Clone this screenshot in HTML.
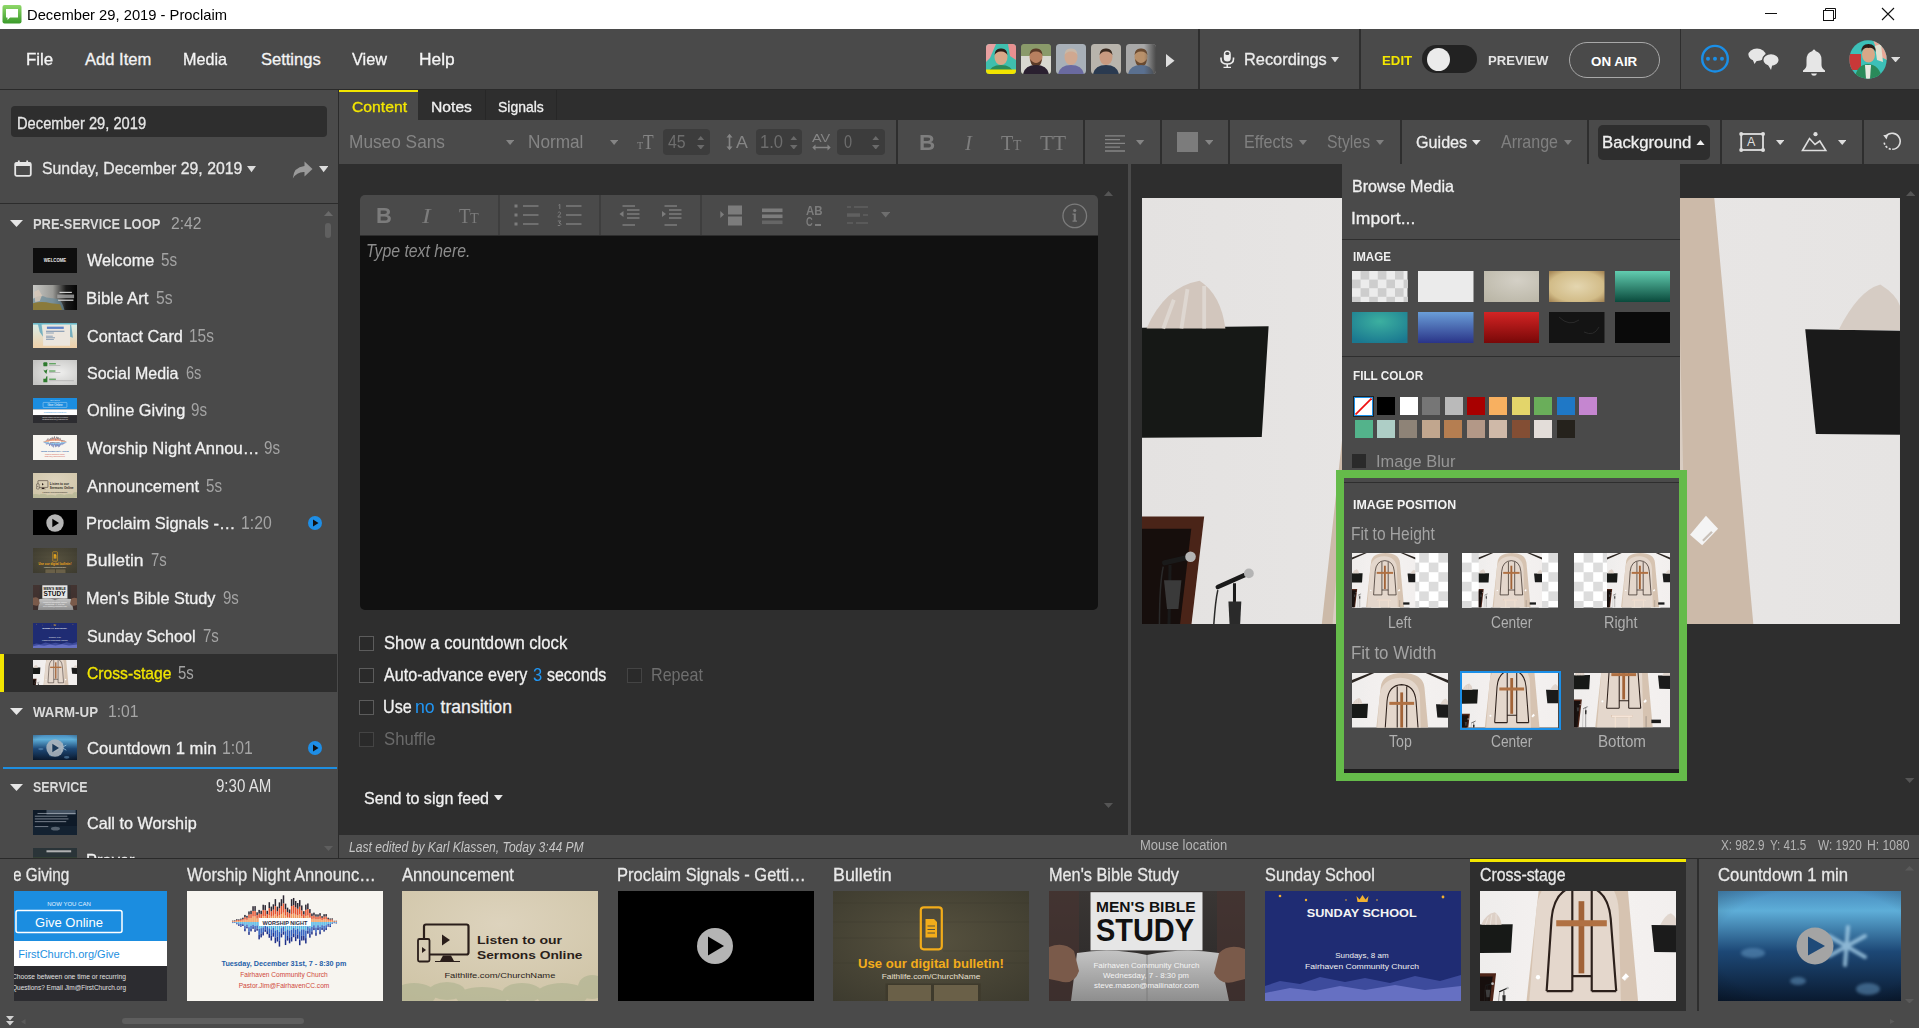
<!DOCTYPE html>
<html><head><meta charset="utf-8"><style>
html,body{margin:0;padding:0;width:1919px;height:1028px;overflow:hidden;background:#2e2e2e;font-family:'Liberation Sans',sans-serif}
div{position:absolute;box-sizing:border-box}
.t{line-height:0;white-space:pre;transform-origin:0 0}
svg{position:absolute}

</style></head><body>
<div style="left:0px;top:0px;width:1919px;height:29px;background:#ffffff;"></div>
<svg style="left:2px;top:5px" width="20" height="19" viewBox="0 0 20 19"><defs><linearGradient id="ag" x1="0" y1="0" x2="0" y2="1"><stop offset="0" stop-color="#8fd86a"/><stop offset="1" stop-color="#3a9a2a"/></linearGradient></defs><rect x="0.5" y="0" width="19" height="18.5" rx="2" fill="url(#ag)"/><path d="M4 4H16V12.5H8L5.5 15V12.5H4Z" fill="#fff"/></svg>
<div class="t" style="left:27.04px;top:14.5px;font-size:15.41px;color:#000;transform:scaleX(0.957);">December 29, 2019 - Proclaim</div>
<div style="left:1765px;top:13px;width:12px;height:1px;background:#111;"></div>
<svg style="left:1822px;top:7px" width="15" height="15" viewBox="0 0 15 15"><path d="M3.5 3.5V1.5H13.5V11.5H11.5" fill="none" stroke="#111" stroke-width="1"/><rect x="1.5" y="3.5" width="10" height="10" fill="none" stroke="#111" stroke-width="1"/></svg>
<svg style="left:1881px;top:7px" width="14" height="14" viewBox="0 0 14 14"><path d="M1 1L13 13M13 1L1 13" stroke="#111" stroke-width="1.1"/></svg>
<div style="left:0px;top:29px;width:1919px;height:60px;background:#4a4a4a;"></div>
<div style="left:0px;top:89px;width:1919px;height:1px;background:#2a2a2a;"></div>
<div class="t" style="left:25.68px;top:59.5px;font-size:16.57px;color:#f4f4f4;-webkit-text-stroke:0.3px #f4f4f4;transform:scaleX(1.021);">File</div>
<div class="t" style="left:85px;top:59.5px;font-size:16.57px;color:#f4f4f4;-webkit-text-stroke:0.3px #f4f4f4;">Add Item</div>
<div class="t" style="left:182.82px;top:59.5px;font-size:16.57px;color:#f4f4f4;-webkit-text-stroke:0.3px #f4f4f4;transform:scaleX(0.976);">Media</div>
<div class="t" style="left:260.9px;top:59.5px;font-size:16.57px;color:#f4f4f4;-webkit-text-stroke:0.3px #f4f4f4;">Settings</div>
<div class="t" style="left:352px;top:59.5px;font-size:16.57px;color:#f4f4f4;-webkit-text-stroke:0.3px #f4f4f4;transform:scaleX(0.983);">View</div>
<div class="t" style="left:418.65px;top:59.5px;font-size:16.57px;color:#f4f4f4;-webkit-text-stroke:0.3px #f4f4f4;transform:scaleX(1.048);">Help</div>
<svg style="left:986px;top:44px" width="30" height="30" viewBox="0 0 30 30"><defs><clipPath id="av986"><rect width="30" height="30" rx="3.5"/></clipPath></defs><g clip-path="url(#av986)"><rect width="30" height="30" fill="#3fbfae"/><path d="M0 0L10 0L4 14L0 18Z" fill="#e8a0a0"/><path d="M22 0H30V16L24 12Z" fill="#e89090"/><ellipse cx="15" cy="13" rx="6.5" ry="8" fill="#d8a888"/><path d="M8.5 11Q9 4 15 4.5Q21 4 21.5 11Q19 7 15 7.5Q11 7 8.5 11Z" fill="#2c1e18"/><path d="M2 30Q4 21 15 21Q26 21 28 30Z" fill="#2a8a5a"/><rect x="0" y="25.5" width="30" height="5" fill="#f2e400"/></g></svg>
<svg style="left:1021px;top:44px" width="30" height="30" viewBox="0 0 30 30"><defs><clipPath id="av1021"><rect width="30" height="30" rx="3.5"/></clipPath></defs><g clip-path="url(#av1021)"><rect width="30" height="30" fill="#7a8a5a"/><rect x="0" y="0" width="30" height="12" fill="#8a9a6a"/><rect x="0" y="12" width="30" height="18" fill="#d8d8d0"/><ellipse cx="15" cy="13" rx="6.5" ry="8" fill="#b88060"/><path d="M8.5 11Q9 4 15 4.5Q21 4 21.5 11Q19 7 15 7.5Q11 7 8.5 11Z" fill="#5a3a28"/><path d="M9 15Q10 23 15 23Q20 23 21 15Q18 19 15 19Q12 19 9 15Z" fill="#5a3a28"/><path d="M2 30Q4 21 15 21Q26 21 28 30Z" fill="#2a2030"/></g></svg>
<svg style="left:1056px;top:44px" width="30" height="30" viewBox="0 0 30 30"><defs><clipPath id="av1056"><rect width="30" height="30" rx="3.5"/></clipPath></defs><g clip-path="url(#av1056)"><rect width="30" height="30" fill="#a8b0b8"/><ellipse cx="15" cy="13" rx="6.5" ry="8" fill="#d0a890"/><path d="M8.5 11Q9 4 15 4.5Q21 4 21.5 11Q19 7 15 7.5Q11 7 8.5 11Z" fill="#c8b8a8"/><path d="M2 30Q4 21 15 21Q26 21 28 30Z" fill="#6a6aa0"/></g></svg>
<svg style="left:1091px;top:44px" width="30" height="30" viewBox="0 0 30 30"><defs><clipPath id="av1091"><rect width="30" height="30" rx="3.5"/></clipPath></defs><g clip-path="url(#av1091)"><rect width="30" height="30" fill="#b8b4ac"/><ellipse cx="15" cy="13" rx="6.5" ry="8" fill="#c89a80"/><path d="M8.5 11Q9 4 15 4.5Q21 4 21.5 11Q19 7 15 7.5Q11 7 8.5 11Z" fill="#3a2a20"/><path d="M2 30Q4 21 15 21Q26 21 28 30Z" fill="#2a3a50"/></g></svg>
<svg style="left:1126px;top:44px" width="30" height="30" viewBox="0 0 30 30"><defs><linearGradient id="fade" x1="0" x2="1"><stop offset="0" stop-color="#4a4a4a" stop-opacity="0"/><stop offset="1" stop-color="#4a4a4a" stop-opacity="1"/></linearGradient></defs><defs><clipPath id="av1126"><rect width="30" height="30" rx="3.5"/></clipPath></defs><g clip-path="url(#av1126)"><rect width="30" height="30" fill="#a8a8a8"/><ellipse cx="15" cy="13" rx="6.5" ry="8" fill="#b8906a"/><path d="M8.5 11Q9 4 15 4.5Q21 4 21.5 11Q19 7 15 7.5Q11 7 8.5 11Z" fill="#6a4a30"/><path d="M9 15Q10 23 15 23Q20 23 21 15Q18 19 15 19Q12 19 9 15Z" fill="#6a4a30"/><path d="M2 30Q4 21 15 21Q26 21 28 30Z" fill="#5a7090"/><rect x="18" y="0" width="12" height="30" fill="url(#fade)"/></g></svg>
<svg style="left:1166px;top:54px" width="9" height="13.4" viewBox="0 0 9 13.4"><path d="M0 0L8.5 6.7L0 13.4Z" fill="#dedede"/></svg>
<div style="left:1198.3px;top:29px;width:1.3px;height:60px;background:#2e2e2e;"></div>
<svg style="left:1220px;top:49.5px" width="14.5" height="18.5" viewBox="0 0 14.5 18.5"><rect x="3.8" y="0.5" width="7" height="11" rx="3.5" fill="#ececec"/><path d="M1 7.5V9Q1 14 7.25 14Q13.5 14 13.5 9V7.5" fill="none" stroke="#ececec" stroke-width="1.6"/><path d="M7.25 14V17.2M3.5 17.5H11" stroke="#ececec" stroke-width="1.6"/><rect x="5.3" y="2" width="4" height="3" rx="1.5" fill="#4a4a4a"/></svg>
<div class="t" style="left:1243.71px;top:59.5px;font-size:16.57px;color:#ececec;-webkit-text-stroke:0.3px #ececec;transform:scaleX(0.988);">Recordings</div>
<svg style="left:1331.3px;top:57px" width="8" height="5.4" viewBox="0 0 8 5.4"><path d="M0 0H8L4 5.4Z" fill="#dddddd"/></svg>
<div style="left:1359.4px;top:29px;width:1.3px;height:60px;background:#2e2e2e;"></div>
<div class="t" style="left:1381.8px;top:61px;font-size:12.65px;color:#f3e600;font-weight:bold;transform:scaleX(1.047);">EDIT</div>
<div style="left:1422px;top:45px;width:55px;height:28px;border-radius:14px;background:#222"></div>
<div style="left:1427px;top:47.5px;width:23px;height:23px;border-radius:50%;background:#ebebeb"></div>
<div class="t" style="left:1487.8px;top:60.5px;font-size:13.37px;color:#e4e4e4;font-weight:bold;transform:scaleX(0.982);">PREVIEW</div>
<div style="left:1569px;top:42px;width:91px;height:36px;border-radius:18px;border:1.5px solid #a8a8a8"></div>
<div class="t" style="left:1591px;top:61.5px;font-size:13.37px;color:#ffffff;font-weight:bold;">ON AIR</div>
<div style="left:1679.9px;top:29px;width:1.3px;height:60px;background:#2e2e2e;"></div>
<svg style="left:1700px;top:44px" width="30" height="30" viewBox="0 0 30 30"><circle cx="15" cy="14.7" r="12.8" fill="none" stroke="#1a8fe8" stroke-width="2.4"/><circle cx="8" cy="14.7" r="2" fill="#1a8fe8"/><circle cx="15" cy="14.7" r="2" fill="#1a8fe8"/><circle cx="22" cy="14.7" r="2" fill="#1a8fe8"/></svg>
<svg style="left:1748px;top:48px" width="32" height="23" viewBox="0 0 32 23"><ellipse cx="9" cy="6.8" rx="8.6" ry="6.2" fill="#e6e6e6"/><path d="M4 10L6.5 16L10 11Z" fill="#e6e6e6"/><ellipse cx="23" cy="12" rx="8.3" ry="6.6" fill="#e6e6e6" stroke="#4a4a4a" stroke-width="1.5"/><path d="M19.5 16L23 22L24.5 16Z" fill="#e6e6e6"/></svg>
<svg style="left:1802px;top:47.5px" width="24" height="28" viewBox="0 0 24 28"><path d="M12 1.5Q13.5 1.5 13.5 3Q19.5 4.5 19.5 12V17Q19.5 20 23 22.5V24H1V22.5Q4.5 20 4.5 17V12Q4.5 4.5 10.5 3Q10.5 1.5 12 1.5Z" fill="#e6e6e6"/><path d="M9 25.5H15Q14.5 27.7 12 27.7Q9.5 27.7 9 25.5Z" fill="#e6e6e6"/></svg>
<svg style="left:1848.5px;top:39.5px" width="38" height="39" viewBox="0 0 38 39"><defs><clipPath id="avc"><ellipse cx="19" cy="19.5" rx="18.7" ry="19.3"/></clipPath></defs><g clip-path="url(#avc)"><rect width="38" height="39" fill="#3cc0b8"/><path d="M0 14H12V30H0Z" fill="#c83838"/><path d="M24 0H38V20L30 16Z" fill="#e8a898"/><path d="M26 6L32 4L34 22L28 20Z" fill="#e0e0d0"/><ellipse cx="19.5" cy="14.5" rx="6.5" ry="8" fill="#d8a888"/><path d="M12.5 12Q12 4 19.5 4Q27 4 26.5 12Q24 7 19.5 8Q15 7 12.5 12Z" fill="#2c1e18"/><path d="M6 39Q7 25 19 24Q31 25 33 39Z" fill="#2a8a5a"/><path d="M16 25H22L21 39H17Z" fill="#e8e8e0"/></g></svg>
<svg style="left:1891px;top:56.7px" width="9.2" height="5.4" viewBox="0 0 9.2 5.4"><path d="M0 0H9.2L4.6 5.4Z" fill="#dddddd"/></svg>
<div style="left:0px;top:90px;width:338px;height:768px;background:#4a4a4a;"></div>
<div style="left:338px;top:90px;width:1px;height:768px;background:#2b2b2b;"></div>
<div style="left:11px;top:106px;width:316px;height:31px;border-radius:4px;background:#2e2e2e"></div>
<div class="t" style="left:17.12px;top:123.5px;font-size:16.72px;color:#e6e6e6;-webkit-text-stroke:0.3px #e6e6e6;transform:scaleX(0.880);">December 29, 2019</div>
<svg style="left:14px;top:159.5px" width="18" height="17" viewBox="0 0 18 17"><rect x="1.2" y="2.8" width="15.6" height="13" rx="1.5" fill="none" stroke="#e6e6e6" stroke-width="1.8"/><rect x="1.2" y="2.8" width="15.6" height="3.2" fill="#e6e6e6"/><path d="M4.8 0.5V3.5M13.2 0.5V3.5" stroke="#e6e6e6" stroke-width="1.8"/></svg>
<div class="t" style="left:41.7px;top:168px;font-size:16.42px;color:#e8e8e8;-webkit-text-stroke:0.3px #e8e8e8;transform:scaleX(0.965);">Sunday, December 29, 2019</div>
<svg style="left:247px;top:166.4px" width="9" height="6.3" viewBox="0 0 9 6.3"><path d="M0 0H9L4.5 6.3Z" fill="#dcdcdc"/></svg>
<svg style="left:291.5px;top:160.5px" width="21" height="18" viewBox="0 0 21 18"><path d="M12.5 0.5L20.5 8L12.5 15.5V11Q5 10.5 0.8 17.5Q1.5 6 12.5 5Z" fill="#9a9a9a"/></svg>
<svg style="left:319px;top:166.4px" width="9.3" height="6.3" viewBox="0 0 9.3 6.3"><path d="M0 0H9.3L4.65 6.3Z" fill="#dcdcdc"/></svg>
<div style="left:0px;top:202.8px;width:338px;height:1.2px;background:#2c2c2c;"></div>
<svg style="left:10.3px;top:220px" width="13" height="7" viewBox="0 0 13 7"><path d="M0 0H13L6.5 7Z" fill="#e6e6e6"/></svg>
<div class="t" style="left:33px;top:224px;font-size:13.95px;color:#dadada;font-weight:bold;transform:scaleX(0.925);">PRE-SERVICE LOOP</div>
<div class="t" style="left:170.7px;top:223px;font-size:17.3px;color:#a6a6a6;transform:scaleX(0.905);">2:42</div>
<svg style="left:324px;top:211px" width="9" height="5" viewBox="0 0 9 5"><path d="M0 5H9L4.5 0Z" fill="#6a6a6a"/></svg>
<div style="left:325px;top:222.5px;width:6px;height:15px;border-radius:3px;background:#606060"></div>
<svg style="left:324px;top:846px" width="9" height="5" viewBox="0 0 9 5"><path d="M0 0H9L4.5 5Z" fill="#5e5e5e"/></svg>
<div style="left:0px;top:654px;width:337px;height:38px;background:#2e2e2e;"></div>
<div style="left:0px;top:654px;width:3.5px;height:38px;background:#f2e500;"></div>
<svg width="0" height="0" style="left:0;top:0;position:absolute">
<symbol id="church" viewBox="0 0 1000 857">
<defs><linearGradient id="wallg" x1="0" y1="0" x2="1" y2="0"><stop offset="0" stop-color="#e4e2e1"/><stop offset="0.5" stop-color="#e9e7e6"/><stop offset="1" stop-color="#e6e4e3"/></linearGradient></defs>
<rect width="1000" height="857" fill="url(#wallg)"/>
<path d="M0 72L185 0H232L0 104Z" fill="#2a2420"/>
<path d="M1000 72L815 0H768L1000 104Z" fill="#2a2420"/>
<path d="M221 857L299 148Q310 5 525 0Q740 5 755 148L820 857Z" fill="#ccbaa9"/>
<path d="M240 857L287 250Q300 60 505 50Q700 60 708 250L722 857Z" fill="#d9cdc2"/>
<path d="M340 659L365 290Q380 125 516 120Q652 125 667 290L695 659M340 659H471M570 659H695M471 140V659M570 140V659M471 582H570" fill="none" stroke="#2a1e1a" stroke-width="11"/>
<rect x="503" y="200" width="29" height="368" fill="#9a5e34"/>
<rect x="389" y="297" width="258" height="31" fill="#a86c40"/>
<path d="M0 319L167 317L158 463L0 464Z" fill="#161816"/>
<path d="M875 321L1000 323V460L889 459Z" fill="#1a1a1a"/>
<path d="M6 320Q30 265 76 257Q104 275 110 320Z" fill="#d2c6bd"/>
<path d="M28 320L42 282M52 320L60 268M82 320L82 264" stroke="#e2dcd6" stroke-width="5" opacity="0.8"/>
<path d="M919 322Q945 270 974 262Q995 275 1000 290V322Z" fill="#d6ccc4"/>
<path d="M0 568H82L48 857H0Z" fill="#4a2418"/><path d="M0 584H65L33 857H0Z" fill="#160e0c"/>
<path d="M30 629L60 622" stroke="#1a1a1a" stroke-width="7" stroke-linecap="round"/><circle cx="64" cy="621" r="7" fill="#b4b4b4"/>
<path d="M37 632L33 857" stroke="#1a1a1a" stroke-width="4"/><path d="M28 634Q18 680 28 857" stroke="#2a2a2a" stroke-width="2" fill="none"/><path d="M29 652H52L48 690H33Z" fill="#3a3a3a"/>
<path d="M100 661L136 645" stroke="#1a1a1a" stroke-width="6" stroke-linecap="round"/><circle cx="141" cy="643" r="6.5" fill="#b4b4b4"/>
<path d="M122 656V857" stroke="#1a1a1a" stroke-width="4"/><path d="M100 665Q92 700 90 857" stroke="#2a2a2a" stroke-width="2" fill="none"/><path d="M114 680H131L129 720H116Z" fill="#2a2a2a"/>
<circle cx="296" cy="588" r="11" fill="#f4f4f4"/><path d="M723 592L744 567L760 584L739 606Z" fill="#f4f4f4"/><path d="M740 600L752 588" stroke="#c8c0b8" stroke-width="3"/>
<path d="M751 740V857" stroke="#2a2a2a" stroke-width="3"/>
<rect x="394" y="731" width="215" height="18" fill="#efe3d8" stroke="#c8a890" stroke-width="3"/>
<path d="M430 749V857M573 749V857" stroke="#e8d8c8" stroke-width="12"/>
<rect x="806" y="776" width="99" height="36" fill="#1a1a1a"/>
</symbol><symbol id='th_giving' viewBox='0 0 196 110' preserveAspectRatio='none'><rect width='196' height='110' fill='#2c2c30'/><rect width='196' height='50' fill='#1b8de0'/><rect y='50' width='196' height='25' fill='#fff'/><text x='98' y='15' font-size='6' fill='#e8f4ff' font-weight='normal' text-anchor='middle' font-family='Liberation Sans' >NOW YOU CAN</text><rect x='45' y='19.5' width='106' height='22' rx='2' fill='none' stroke='#fff' stroke-width='1.5'/><text x='98' y='35.5' font-size='13' fill='#fff' font-weight='normal' text-anchor='middle' font-family='Liberation Sans' >Give Online</text><text x='98' y='67' font-size='11' fill='#1e8fe0' font-weight='normal' text-anchor='middle' font-family='Liberation Sans' >FirstChurch.org/Give</text><text x='41' y='88' font-size='6.8' fill='#e0e0e0' font-weight='normal' text-anchor='start' font-family='Liberation Sans' textLength='114' lengthAdjust='spacingAndGlyphs'>Choose between one time or recurring</text><text x='41' y='99' font-size='6.8' fill='#e0e0e0' font-weight='normal' text-anchor='start' font-family='Liberation Sans' textLength='114' lengthAdjust='spacingAndGlyphs'>Questions? Email Jim@FirstChurch.org</text></symbol><symbol id='th_worship' viewBox='0 0 196 110' preserveAspectRatio='none'><rect width='196' height='110' fill='#f7f5f0'/><rect x='45.00' y='30.53' width='1.5' height='0.47' fill='#f39a5a'/><rect x='45.00' y='30.05' width='1.5' height='0.47' fill='#e5532f'/><rect x='45.00' y='29.64' width='1.5' height='0.41' fill='#2b2633'/><rect x='45.00' y='31.00' width='1.5' height='0.42' fill='#4fb6e6'/><rect x='45.00' y='31.42' width='1.5' height='0.37' fill='#2f5fc0'/><rect x='45.00' y='31.79' width='1.5' height='0.26' fill='#1d2f8a'/><rect x='47.03' y='30.39' width='1.5' height='0.61' fill='#f39a5a'/><rect x='47.03' y='29.78' width='1.5' height='0.61' fill='#e5532f'/><rect x='47.03' y='29.25' width='1.5' height='0.52' fill='#2b2633'/><rect x='47.03' y='31.00' width='1.5' height='0.38' fill='#4fb6e6'/><rect x='47.03' y='31.38' width='1.5' height='0.34' fill='#2f5fc0'/><rect x='47.03' y='31.72' width='1.5' height='0.24' fill='#1d2f8a'/><rect x='49.06' y='30.04' width='1.5' height='0.96' fill='#f39a5a'/><rect x='49.06' y='29.08' width='1.5' height='0.96' fill='#e5532f'/><rect x='49.06' y='28.25' width='1.5' height='0.82' fill='#2b2633'/><rect x='49.06' y='31.00' width='1.5' height='0.91' fill='#4fb6e6'/><rect x='49.06' y='31.91' width='1.5' height='0.80' fill='#2f5fc0'/><rect x='49.06' y='32.71' width='1.5' height='0.57' fill='#1d2f8a'/><rect x='51.09' y='30.08' width='1.5' height='0.92' fill='#f39a5a'/><rect x='51.09' y='29.16' width='1.5' height='0.92' fill='#e5532f'/><rect x='51.09' y='28.38' width='1.5' height='0.79' fill='#2b2633'/><rect x='51.09' y='31.00' width='1.5' height='1.53' fill='#4fb6e6'/><rect x='51.09' y='32.53' width='1.5' height='1.34' fill='#2f5fc0'/><rect x='51.09' y='33.88' width='1.5' height='0.96' fill='#1d2f8a'/><rect x='53.12' y='29.82' width='1.5' height='1.18' fill='#f39a5a'/><rect x='53.12' y='28.65' width='1.5' height='1.18' fill='#e5532f'/><rect x='53.12' y='27.64' width='1.5' height='1.01' fill='#2b2633'/><rect x='53.12' y='31.00' width='1.5' height='1.89' fill='#4fb6e6'/><rect x='53.12' y='32.89' width='1.5' height='1.65' fill='#2f5fc0'/><rect x='53.12' y='34.54' width='1.5' height='1.18' fill='#1d2f8a'/><rect x='55.15' y='29.50' width='1.5' height='1.50' fill='#f39a5a'/><rect x='55.15' y='28.00' width='1.5' height='1.50' fill='#e5532f'/><rect x='55.15' y='26.72' width='1.5' height='1.29' fill='#2b2633'/><rect x='55.15' y='31.00' width='1.5' height='1.59' fill='#4fb6e6'/><rect x='55.15' y='32.59' width='1.5' height='1.40' fill='#2f5fc0'/><rect x='55.15' y='33.99' width='1.5' height='1.00' fill='#1d2f8a'/><rect x='57.18' y='28.53' width='1.5' height='2.47' fill='#f39a5a'/><rect x='57.18' y='26.05' width='1.5' height='2.47' fill='#e5532f'/><rect x='57.18' y='23.93' width='1.5' height='2.12' fill='#2b2633'/><rect x='57.18' y='31.00' width='1.5' height='3.71' fill='#4fb6e6'/><rect x='57.18' y='34.71' width='1.5' height='3.24' fill='#2f5fc0'/><rect x='57.18' y='37.95' width='1.5' height='2.32' fill='#1d2f8a'/><rect x='59.21' y='28.85' width='1.5' height='2.15' fill='#f39a5a'/><rect x='59.21' y='26.70' width='1.5' height='2.15' fill='#e5532f'/><rect x='59.21' y='24.86' width='1.5' height='1.84' fill='#2b2633'/><rect x='59.21' y='31.00' width='1.5' height='2.53' fill='#4fb6e6'/><rect x='59.21' y='33.53' width='1.5' height='2.21' fill='#2f5fc0'/><rect x='59.21' y='35.74' width='1.5' height='1.58' fill='#1d2f8a'/><rect x='61.24' y='27.30' width='1.5' height='3.70' fill='#f39a5a'/><rect x='61.24' y='23.60' width='1.5' height='3.70' fill='#e5532f'/><rect x='61.24' y='20.43' width='1.5' height='3.17' fill='#2b2633'/><rect x='61.24' y='31.00' width='1.5' height='5.15' fill='#4fb6e6'/><rect x='61.24' y='36.15' width='1.5' height='4.51' fill='#2f5fc0'/><rect x='61.24' y='40.65' width='1.5' height='3.22' fill='#1d2f8a'/><rect x='63.27' y='27.06' width='1.5' height='3.94' fill='#f39a5a'/><rect x='63.27' y='23.12' width='1.5' height='3.94' fill='#e5532f'/><rect x='63.27' y='19.74' width='1.5' height='3.38' fill='#2b2633'/><rect x='63.27' y='31.00' width='1.5' height='3.74' fill='#4fb6e6'/><rect x='63.27' y='34.74' width='1.5' height='3.28' fill='#2f5fc0'/><rect x='63.27' y='38.02' width='1.5' height='2.34' fill='#1d2f8a'/><rect x='65.30' y='25.48' width='1.5' height='5.52' fill='#f39a5a'/><rect x='65.30' y='19.96' width='1.5' height='5.52' fill='#e5532f'/><rect x='65.30' y='15.23' width='1.5' height='4.73' fill='#2b2633'/><rect x='65.30' y='31.00' width='1.5' height='2.74' fill='#4fb6e6'/><rect x='65.30' y='33.74' width='1.5' height='2.39' fill='#2f5fc0'/><rect x='65.30' y='36.13' width='1.5' height='1.71' fill='#1d2f8a'/><rect x='67.33' y='25.44' width='1.5' height='5.56' fill='#f39a5a'/><rect x='67.33' y='19.88' width='1.5' height='5.56' fill='#e5532f'/><rect x='67.33' y='15.11' width='1.5' height='4.77' fill='#2b2633'/><rect x='67.33' y='31.00' width='1.5' height='3.95' fill='#4fb6e6'/><rect x='67.33' y='34.95' width='1.5' height='3.46' fill='#2f5fc0'/><rect x='67.33' y='38.41' width='1.5' height='2.47' fill='#1d2f8a'/><rect x='69.36' y='27.59' width='1.5' height='3.41' fill='#f39a5a'/><rect x='69.36' y='24.18' width='1.5' height='3.41' fill='#e5532f'/><rect x='69.36' y='21.26' width='1.5' height='2.92' fill='#2b2633'/><rect x='69.36' y='31.00' width='1.5' height='3.47' fill='#4fb6e6'/><rect x='69.36' y='34.47' width='1.5' height='3.03' fill='#2f5fc0'/><rect x='69.36' y='37.50' width='1.5' height='2.17' fill='#1d2f8a'/><rect x='71.39' y='26.77' width='1.5' height='4.23' fill='#f39a5a'/><rect x='71.39' y='22.53' width='1.5' height='4.23' fill='#e5532f'/><rect x='71.39' y='18.91' width='1.5' height='3.63' fill='#2b2633'/><rect x='71.39' y='31.00' width='1.5' height='6.95' fill='#4fb6e6'/><rect x='71.39' y='37.95' width='1.5' height='6.08' fill='#2f5fc0'/><rect x='71.39' y='44.02' width='1.5' height='4.34' fill='#1d2f8a'/><rect x='73.42' y='27.05' width='1.5' height='3.95' fill='#f39a5a'/><rect x='73.42' y='23.09' width='1.5' height='3.95' fill='#e5532f'/><rect x='73.42' y='19.70' width='1.5' height='3.39' fill='#2b2633'/><rect x='73.42' y='31.00' width='1.5' height='6.16' fill='#4fb6e6'/><rect x='73.42' y='37.16' width='1.5' height='5.39' fill='#2f5fc0'/><rect x='73.42' y='42.55' width='1.5' height='3.85' fill='#1d2f8a'/><rect x='75.45' y='24.96' width='1.5' height='6.04' fill='#f39a5a'/><rect x='75.45' y='18.92' width='1.5' height='6.04' fill='#e5532f'/><rect x='75.45' y='13.74' width='1.5' height='5.18' fill='#2b2633'/><rect x='75.45' y='31.00' width='1.5' height='5.37' fill='#4fb6e6'/><rect x='75.45' y='36.37' width='1.5' height='4.70' fill='#2f5fc0'/><rect x='75.45' y='41.07' width='1.5' height='3.36' fill='#1d2f8a'/><rect x='77.48' y='25.10' width='1.5' height='5.90' fill='#f39a5a'/><rect x='77.48' y='19.20' width='1.5' height='5.90' fill='#e5532f'/><rect x='77.48' y='14.15' width='1.5' height='5.06' fill='#2b2633'/><rect x='77.48' y='31.00' width='1.5' height='3.93' fill='#4fb6e6'/><rect x='77.48' y='34.93' width='1.5' height='3.44' fill='#2f5fc0'/><rect x='77.48' y='38.36' width='1.5' height='2.45' fill='#1d2f8a'/><rect x='79.51' y='27.07' width='1.5' height='3.93' fill='#f39a5a'/><rect x='79.51' y='23.14' width='1.5' height='3.93' fill='#e5532f'/><rect x='79.51' y='19.77' width='1.5' height='3.37' fill='#2b2633'/><rect x='79.51' y='31.00' width='1.5' height='4.87' fill='#4fb6e6'/><rect x='79.51' y='35.87' width='1.5' height='4.26' fill='#2f5fc0'/><rect x='79.51' y='40.13' width='1.5' height='3.04' fill='#1d2f8a'/><rect x='81.54' y='24.07' width='1.5' height='6.93' fill='#f39a5a'/><rect x='81.54' y='17.14' width='1.5' height='6.93' fill='#e5532f'/><rect x='81.54' y='11.20' width='1.5' height='5.94' fill='#2b2633'/><rect x='81.54' y='31.00' width='1.5' height='6.31' fill='#4fb6e6'/><rect x='81.54' y='37.31' width='1.5' height='5.52' fill='#2f5fc0'/><rect x='81.54' y='42.83' width='1.5' height='3.94' fill='#1d2f8a'/><rect x='83.57' y='25.62' width='1.5' height='5.38' fill='#f39a5a'/><rect x='83.57' y='20.23' width='1.5' height='5.38' fill='#e5532f'/><rect x='83.57' y='15.62' width='1.5' height='4.61' fill='#2b2633'/><rect x='83.57' y='31.00' width='1.5' height='7.42' fill='#4fb6e6'/><rect x='83.57' y='38.42' width='1.5' height='6.49' fill='#2f5fc0'/><rect x='83.57' y='44.92' width='1.5' height='4.64' fill='#1d2f8a'/><rect x='85.60' y='24.81' width='1.5' height='6.19' fill='#f39a5a'/><rect x='85.60' y='18.62' width='1.5' height='6.19' fill='#e5532f'/><rect x='85.60' y='13.31' width='1.5' height='5.31' fill='#2b2633'/><rect x='85.60' y='31.00' width='1.5' height='5.87' fill='#4fb6e6'/><rect x='85.60' y='36.87' width='1.5' height='5.13' fill='#2f5fc0'/><rect x='85.60' y='42.00' width='1.5' height='3.67' fill='#1d2f8a'/><rect x='87.63' y='22.99' width='1.5' height='8.01' fill='#f39a5a'/><rect x='87.63' y='14.98' width='1.5' height='8.01' fill='#e5532f'/><rect x='87.63' y='8.11' width='1.5' height='6.87' fill='#2b2633'/><rect x='87.63' y='31.00' width='1.5' height='8.46' fill='#4fb6e6'/><rect x='87.63' y='39.46' width='1.5' height='7.40' fill='#2f5fc0'/><rect x='87.63' y='46.86' width='1.5' height='5.29' fill='#1d2f8a'/><rect x='89.66' y='25.63' width='1.5' height='5.37' fill='#f39a5a'/><rect x='89.66' y='20.27' width='1.5' height='5.37' fill='#e5532f'/><rect x='89.66' y='15.67' width='1.5' height='4.60' fill='#2b2633'/><rect x='89.66' y='31.00' width='1.5' height='7.82' fill='#4fb6e6'/><rect x='89.66' y='38.82' width='1.5' height='6.84' fill='#2f5fc0'/><rect x='89.66' y='45.66' width='1.5' height='4.89' fill='#1d2f8a'/><rect x='91.69' y='24.12' width='1.5' height='6.88' fill='#f39a5a'/><rect x='91.69' y='17.25' width='1.5' height='6.88' fill='#e5532f'/><rect x='91.69' y='11.36' width='1.5' height='5.89' fill='#2b2633'/><rect x='91.69' y='31.00' width='1.5' height='9.84' fill='#4fb6e6'/><rect x='91.69' y='40.84' width='1.5' height='8.61' fill='#2f5fc0'/><rect x='91.69' y='49.45' width='1.5' height='6.15' fill='#1d2f8a'/><rect x='93.72' y='23.01' width='1.5' height='7.99' fill='#f39a5a'/><rect x='93.72' y='15.01' width='1.5' height='7.99' fill='#e5532f'/><rect x='93.72' y='8.16' width='1.5' height='6.85' fill='#2b2633'/><rect x='93.72' y='31.00' width='1.5' height='6.15' fill='#4fb6e6'/><rect x='93.72' y='37.15' width='1.5' height='5.38' fill='#2f5fc0'/><rect x='93.72' y='42.53' width='1.5' height='3.84' fill='#1d2f8a'/><rect x='95.75' y='21.66' width='1.5' height='9.34' fill='#f39a5a'/><rect x='95.75' y='12.32' width='1.5' height='9.34' fill='#e5532f'/><rect x='95.75' y='4.32' width='1.5' height='8.00' fill='#2b2633'/><rect x='95.75' y='31.00' width='1.5' height='5.08' fill='#4fb6e6'/><rect x='95.75' y='36.08' width='1.5' height='4.45' fill='#2f5fc0'/><rect x='95.75' y='40.53' width='1.5' height='3.18' fill='#1d2f8a'/><rect x='97.78' y='24.58' width='1.5' height='6.42' fill='#f39a5a'/><rect x='97.78' y='18.16' width='1.5' height='6.42' fill='#e5532f'/><rect x='97.78' y='12.66' width='1.5' height='5.50' fill='#2b2633'/><rect x='97.78' y='31.00' width='1.5' height='9.22' fill='#4fb6e6'/><rect x='97.78' y='40.22' width='1.5' height='8.07' fill='#2f5fc0'/><rect x='97.78' y='48.28' width='1.5' height='5.76' fill='#1d2f8a'/><rect x='99.81' y='25.99' width='1.5' height='5.01' fill='#f39a5a'/><rect x='99.81' y='20.98' width='1.5' height='5.01' fill='#e5532f'/><rect x='99.81' y='16.68' width='1.5' height='4.30' fill='#2b2633'/><rect x='99.81' y='31.00' width='1.5' height='7.44' fill='#4fb6e6'/><rect x='99.81' y='38.44' width='1.5' height='6.51' fill='#2f5fc0'/><rect x='99.81' y='44.96' width='1.5' height='4.65' fill='#1d2f8a'/><rect x='101.84' y='26.61' width='1.5' height='4.39' fill='#f39a5a'/><rect x='101.84' y='22.22' width='1.5' height='4.39' fill='#e5532f'/><rect x='101.84' y='18.46' width='1.5' height='3.76' fill='#2b2633'/><rect x='101.84' y='31.00' width='1.5' height='8.52' fill='#4fb6e6'/><rect x='101.84' y='39.52' width='1.5' height='7.45' fill='#2f5fc0'/><rect x='101.84' y='46.97' width='1.5' height='5.32' fill='#1d2f8a'/><rect x='103.87' y='23.00' width='1.5' height='8.00' fill='#f39a5a'/><rect x='103.87' y='15.01' width='1.5' height='8.00' fill='#e5532f'/><rect x='103.87' y='8.15' width='1.5' height='6.85' fill='#2b2633'/><rect x='103.87' y='31.00' width='1.5' height='7.81' fill='#4fb6e6'/><rect x='103.87' y='38.81' width='1.5' height='6.83' fill='#2f5fc0'/><rect x='103.87' y='45.64' width='1.5' height='4.88' fill='#1d2f8a'/><rect x='105.90' y='22.59' width='1.5' height='8.41' fill='#f39a5a'/><rect x='105.90' y='14.17' width='1.5' height='8.41' fill='#e5532f'/><rect x='105.90' y='6.96' width='1.5' height='7.21' fill='#2b2633'/><rect x='105.90' y='31.00' width='1.5' height='6.07' fill='#4fb6e6'/><rect x='105.90' y='37.07' width='1.5' height='5.31' fill='#2f5fc0'/><rect x='105.90' y='42.39' width='1.5' height='3.80' fill='#1d2f8a'/><rect x='107.93' y='23.63' width='1.5' height='7.37' fill='#f39a5a'/><rect x='107.93' y='16.26' width='1.5' height='7.37' fill='#e5532f'/><rect x='107.93' y='9.95' width='1.5' height='6.32' fill='#2b2633'/><rect x='107.93' y='31.00' width='1.5' height='7.65' fill='#4fb6e6'/><rect x='107.93' y='38.65' width='1.5' height='6.70' fill='#2f5fc0'/><rect x='107.93' y='45.35' width='1.5' height='4.78' fill='#1d2f8a'/><rect x='109.96' y='24.35' width='1.5' height='6.65' fill='#f39a5a'/><rect x='109.96' y='17.71' width='1.5' height='6.65' fill='#e5532f'/><rect x='109.96' y='12.01' width='1.5' height='5.70' fill='#2b2633'/><rect x='109.96' y='31.00' width='1.5' height='6.65' fill='#4fb6e6'/><rect x='109.96' y='37.65' width='1.5' height='5.82' fill='#2f5fc0'/><rect x='109.96' y='43.48' width='1.5' height='4.16' fill='#1d2f8a'/><rect x='111.99' y='23.33' width='1.5' height='7.67' fill='#f39a5a'/><rect x='111.99' y='15.67' width='1.5' height='7.67' fill='#e5532f'/><rect x='111.99' y='9.10' width='1.5' height='6.57' fill='#2b2633'/><rect x='111.99' y='31.00' width='1.5' height='9.29' fill='#4fb6e6'/><rect x='111.99' y='40.29' width='1.5' height='8.13' fill='#2f5fc0'/><rect x='111.99' y='48.41' width='1.5' height='5.80' fill='#1d2f8a'/><rect x='114.02' y='25.21' width='1.5' height='5.79' fill='#f39a5a'/><rect x='114.02' y='19.43' width='1.5' height='5.79' fill='#e5532f'/><rect x='114.02' y='14.47' width='1.5' height='4.96' fill='#2b2633'/><rect x='114.02' y='31.00' width='1.5' height='7.43' fill='#4fb6e6'/><rect x='114.02' y='38.43' width='1.5' height='6.50' fill='#2f5fc0'/><rect x='114.02' y='44.93' width='1.5' height='4.64' fill='#1d2f8a'/><rect x='116.05' y='27.20' width='1.5' height='3.80' fill='#f39a5a'/><rect x='116.05' y='23.41' width='1.5' height='3.80' fill='#e5532f'/><rect x='116.05' y='20.16' width='1.5' height='3.25' fill='#2b2633'/><rect x='116.05' y='31.00' width='1.5' height='7.37' fill='#4fb6e6'/><rect x='116.05' y='38.37' width='1.5' height='6.45' fill='#2f5fc0'/><rect x='116.05' y='44.81' width='1.5' height='4.60' fill='#1d2f8a'/><rect x='118.08' y='24.93' width='1.5' height='6.07' fill='#f39a5a'/><rect x='118.08' y='18.85' width='1.5' height='6.07' fill='#e5532f'/><rect x='118.08' y='13.65' width='1.5' height='5.21' fill='#2b2633'/><rect x='118.08' y='31.00' width='1.5' height='8.58' fill='#4fb6e6'/><rect x='118.08' y='39.58' width='1.5' height='7.51' fill='#2f5fc0'/><rect x='118.08' y='47.08' width='1.5' height='5.36' fill='#1d2f8a'/><rect x='120.11' y='24.51' width='1.5' height='6.49' fill='#f39a5a'/><rect x='120.11' y='18.02' width='1.5' height='6.49' fill='#e5532f'/><rect x='120.11' y='12.45' width='1.5' height='5.56' fill='#2b2633'/><rect x='120.11' y='31.00' width='1.5' height='4.69' fill='#4fb6e6'/><rect x='120.11' y='35.69' width='1.5' height='4.11' fill='#2f5fc0'/><rect x='120.11' y='39.80' width='1.5' height='2.93' fill='#1d2f8a'/><rect x='122.14' y='26.48' width='1.5' height='4.52' fill='#f39a5a'/><rect x='122.14' y='21.95' width='1.5' height='4.52' fill='#e5532f'/><rect x='122.14' y='18.08' width='1.5' height='3.88' fill='#2b2633'/><rect x='122.14' y='31.00' width='1.5' height='6.25' fill='#4fb6e6'/><rect x='122.14' y='37.25' width='1.5' height='5.47' fill='#2f5fc0'/><rect x='122.14' y='42.73' width='1.5' height='3.91' fill='#1d2f8a'/><rect x='124.17' y='28.02' width='1.5' height='2.98' fill='#f39a5a'/><rect x='124.17' y='25.04' width='1.5' height='2.98' fill='#e5532f'/><rect x='124.17' y='22.49' width='1.5' height='2.55' fill='#2b2633'/><rect x='124.17' y='31.00' width='1.5' height='4.98' fill='#4fb6e6'/><rect x='124.17' y='35.98' width='1.5' height='4.36' fill='#2f5fc0'/><rect x='124.17' y='40.35' width='1.5' height='3.12' fill='#1d2f8a'/><rect x='126.20' y='27.73' width='1.5' height='3.27' fill='#f39a5a'/><rect x='126.20' y='24.46' width='1.5' height='3.27' fill='#e5532f'/><rect x='126.20' y='21.66' width='1.5' height='2.80' fill='#2b2633'/><rect x='126.20' y='31.00' width='1.5' height='3.24' fill='#4fb6e6'/><rect x='126.20' y='34.24' width='1.5' height='2.84' fill='#2f5fc0'/><rect x='126.20' y='37.08' width='1.5' height='2.03' fill='#1d2f8a'/><rect x='128.23' y='28.30' width='1.5' height='2.70' fill='#f39a5a'/><rect x='128.23' y='25.60' width='1.5' height='2.70' fill='#e5532f'/><rect x='128.23' y='23.29' width='1.5' height='2.31' fill='#2b2633'/><rect x='128.23' y='31.00' width='1.5' height='5.50' fill='#4fb6e6'/><rect x='128.23' y='36.50' width='1.5' height='4.82' fill='#2f5fc0'/><rect x='128.23' y='41.32' width='1.5' height='3.44' fill='#1d2f8a'/><rect x='130.26' y='28.32' width='1.5' height='2.68' fill='#f39a5a'/><rect x='130.26' y='25.65' width='1.5' height='2.68' fill='#e5532f'/><rect x='130.26' y='23.36' width='1.5' height='2.29' fill='#2b2633'/><rect x='130.26' y='31.00' width='1.5' height='3.22' fill='#4fb6e6'/><rect x='130.26' y='34.22' width='1.5' height='2.82' fill='#2f5fc0'/><rect x='130.26' y='37.03' width='1.5' height='2.01' fill='#1d2f8a'/><rect x='132.29' y='27.91' width='1.5' height='3.09' fill='#f39a5a'/><rect x='132.29' y='24.81' width='1.5' height='3.09' fill='#e5532f'/><rect x='132.29' y='22.16' width='1.5' height='2.65' fill='#2b2633'/><rect x='132.29' y='31.00' width='1.5' height='4.91' fill='#4fb6e6'/><rect x='132.29' y='35.91' width='1.5' height='4.29' fill='#2f5fc0'/><rect x='132.29' y='40.20' width='1.5' height='3.07' fill='#1d2f8a'/><rect x='134.32' y='28.95' width='1.5' height='2.05' fill='#f39a5a'/><rect x='134.32' y='26.90' width='1.5' height='2.05' fill='#e5532f'/><rect x='134.32' y='25.14' width='1.5' height='1.76' fill='#2b2633'/><rect x='134.32' y='31.00' width='1.5' height='3.17' fill='#4fb6e6'/><rect x='134.32' y='34.17' width='1.5' height='2.78' fill='#2f5fc0'/><rect x='134.32' y='36.95' width='1.5' height='1.98' fill='#1d2f8a'/><rect x='136.35' y='28.28' width='1.5' height='2.72' fill='#f39a5a'/><rect x='136.35' y='25.56' width='1.5' height='2.72' fill='#e5532f'/><rect x='136.35' y='23.22' width='1.5' height='2.33' fill='#2b2633'/><rect x='136.35' y='31.00' width='1.5' height='3.85' fill='#4fb6e6'/><rect x='136.35' y='34.85' width='1.5' height='3.37' fill='#2f5fc0'/><rect x='136.35' y='38.21' width='1.5' height='2.40' fill='#1d2f8a'/><rect x='138.38' y='28.24' width='1.5' height='2.76' fill='#f39a5a'/><rect x='138.38' y='25.47' width='1.5' height='2.76' fill='#e5532f'/><rect x='138.38' y='23.10' width='1.5' height='2.37' fill='#2b2633'/><rect x='138.38' y='31.00' width='1.5' height='3.22' fill='#4fb6e6'/><rect x='138.38' y='34.22' width='1.5' height='2.82' fill='#2f5fc0'/><rect x='138.38' y='37.04' width='1.5' height='2.01' fill='#1d2f8a'/><rect x='140.41' y='29.49' width='1.5' height='1.51' fill='#f39a5a'/><rect x='140.41' y='27.99' width='1.5' height='1.51' fill='#e5532f'/><rect x='140.41' y='26.69' width='1.5' height='1.29' fill='#2b2633'/><rect x='140.41' y='31.00' width='1.5' height='1.85' fill='#4fb6e6'/><rect x='140.41' y='32.85' width='1.5' height='1.62' fill='#2f5fc0'/><rect x='140.41' y='34.48' width='1.5' height='1.16' fill='#1d2f8a'/><rect x='142.44' y='29.77' width='1.5' height='1.23' fill='#f39a5a'/><rect x='142.44' y='28.53' width='1.5' height='1.23' fill='#e5532f'/><rect x='142.44' y='27.47' width='1.5' height='1.06' fill='#2b2633'/><rect x='142.44' y='31.00' width='1.5' height='2.03' fill='#4fb6e6'/><rect x='142.44' y='33.03' width='1.5' height='1.77' fill='#2f5fc0'/><rect x='142.44' y='34.80' width='1.5' height='1.27' fill='#1d2f8a'/><rect x='144.47' y='29.74' width='1.5' height='1.26' fill='#f39a5a'/><rect x='144.47' y='28.48' width='1.5' height='1.26' fill='#e5532f'/><rect x='144.47' y='27.39' width='1.5' height='1.08' fill='#2b2633'/><rect x='144.47' y='31.00' width='1.5' height='0.72' fill='#4fb6e6'/><rect x='144.47' y='31.72' width='1.5' height='0.63' fill='#2f5fc0'/><rect x='144.47' y='32.36' width='1.5' height='0.45' fill='#1d2f8a'/><rect x='146.50' y='30.59' width='1.5' height='0.41' fill='#f39a5a'/><rect x='146.50' y='30.17' width='1.5' height='0.41' fill='#e5532f'/><rect x='146.50' y='29.82' width='1.5' height='0.35' fill='#2b2633'/><rect x='146.50' y='31.00' width='1.5' height='0.47' fill='#4fb6e6'/><rect x='146.50' y='31.47' width='1.5' height='0.41' fill='#2f5fc0'/><rect x='146.50' y='31.87' width='1.5' height='0.29' fill='#1d2f8a'/><rect x='148.53' y='30.56' width='1.5' height='0.44' fill='#f39a5a'/><rect x='148.53' y='30.13' width='1.5' height='0.44' fill='#e5532f'/><rect x='148.53' y='29.75' width='1.5' height='0.37' fill='#2b2633'/><rect x='148.53' y='31.00' width='1.5' height='0.60' fill='#4fb6e6'/><rect x='148.53' y='31.60' width='1.5' height='0.52' fill='#2f5fc0'/><rect x='148.53' y='32.12' width='1.5' height='0.37' fill='#1d2f8a'/><rect x='72' y='27' width='52' height='8' fill='#fff'/><text x='98' y='33.5' font-size='5.5' fill='#2a2a40' font-weight='bold' text-anchor='middle' font-family='Liberation Sans' >WORSHIP NIGHT</text><text x='97' y='75' font-size='7.2' fill='#1f5fa8' font-weight='bold' text-anchor='middle' font-family='Liberation Sans' >Tuesday, December 31st, 7 - 8:30 pm</text><text x='97' y='86' font-size='6.6' fill='#d0483a' font-weight='normal' text-anchor='middle' font-family='Liberation Sans' >Fairhaven Community Church</text><text x='97' y='96.5' font-size='6.6' fill='#d0483a' font-weight='normal' text-anchor='middle' font-family='Liberation Sans' >Pastor.Jim@FairhavenCC.com</text></symbol><symbol id='th_announce' viewBox='0 0 196 110' preserveAspectRatio='none'><defs><radialGradient id='anb' cx='0.5' cy='0.3' r='0.8'><stop offset='0' stop-color='#ddd3bd'/><stop offset='1' stop-color='#cfc4a6'/></radialGradient></defs><rect width='196' height='110' fill='url(#anb)'/><g fill='#a9b08c' opacity='0.55'><ellipse cx='12' cy='104' rx='22' ry='12'/><ellipse cx='45' cy='100' rx='18' ry='9'/><ellipse cx='80' cy='106' rx='26' ry='10'/><ellipse cx='120' cy='102' rx='20' ry='10'/><ellipse cx='160' cy='104' rx='26' ry='12'/><ellipse cx='190' cy='96' rx='14' ry='12'/></g><rect x='22' y='33.5' width='44.5' height='30' rx='2' fill='none' stroke='#2a1e1a' stroke-width='2.2'/><path d='M41 64.5L38 70H52L49 64.5Z' fill='#2a1e1a'/><path d='M33 70.5H58' stroke='#2a1e1a' stroke-width='1'/><path d='M40 43.5L48 49L40 54.5Z' fill='#2a1e1a'/><rect x='16' y='48' width='11.5' height='22.5' rx='1.5' fill='#d6ccb4' stroke='#2a1e1a' stroke-width='1.8'/><path d='M20 56L24 59L20 62Z' fill='#2a1e1a'/><text x='75' y='52.7' font-size='11.8' fill='#2a1e1a' font-weight='bold' text-anchor='start' font-family='Liberation Sans' textLength='85' lengthAdjust='spacingAndGlyphs'>Listen to our</text><text x='75' y='68.4' font-size='11.8' fill='#2a1e1a' font-weight='bold' text-anchor='start' font-family='Liberation Sans' textLength='105.5' lengthAdjust='spacingAndGlyphs'>Sermons Online</text><text x='42.4' y='87' font-size='8' fill='#2a1e1a' font-weight='normal' text-anchor='start' font-family='Liberation Sans' textLength='111' lengthAdjust='spacingAndGlyphs'>Faithlife.com/ChurchName</text></symbol><symbol id='th_signals' viewBox='0 0 196 110' preserveAspectRatio='none'><rect width='196' height='110' fill='#000'/><circle cx='97' cy='55' r='18' fill='#b4b4b4'/><path d='M90 45.5L106 55L90 64.5Z' fill='#000'/></symbol><symbol id='th_bulletin' viewBox='0 0 196 110' preserveAspectRatio='none'><defs><radialGradient id='bub' cx='0.5' cy='0.45' r='0.75'><stop offset='0' stop-color='#57523f'/><stop offset='1' stop-color='#3c3a2e'/></radialGradient></defs><rect width='196' height='110' fill='url(#bub)'/><g stroke='#2e2c24' stroke-width='0.8' opacity='0.22'><path d='M0 12H196M0 31H196M0 47H90M110 60H196M0 72H196'/></g><rect x='87.8' y='16.3' width='21' height='42' rx='3' fill='none' stroke='#f2ac1a' stroke-width='2.2'/><path d='M92.5 28H101L104 31V46.5H92.5Z' fill='#f2ac1a'/><path d='M94.5 35H102M94.5 38.5H102M94.5 42H102' stroke='#57523f' stroke-width='1'/><path d='M52.5 92.6H147.7V110H52.5Z' fill='#3e3a2c'/><path d='M55 94H98V110H55ZM101 94H145V110H101Z' fill='#6a6048'/><text x='25' y='76.5' font-size='12.5' fill='#f2ac1c' font-weight='bold' text-anchor='start' font-family='Liberation Sans' textLength='146' lengthAdjust='spacingAndGlyphs'>Use our digital bulletin!</text><text x='48.7' y='88' font-size='7.6' fill='#e8e0d0' font-weight='normal' text-anchor='start' font-family='Liberation Sans' textLength='98.6' lengthAdjust='spacingAndGlyphs'>Faithlife.com/ChurchName</text></symbol><symbol id='th_mens' viewBox='0 0 196 110' preserveAspectRatio='none'><defs><linearGradient id='mng' x1='0' y1='0' x2='0' y2='1'><stop offset='0' stop-color='#3a3634'/><stop offset='1' stop-color='#2a2828'/></linearGradient><linearGradient id='mpg' x1='0' y1='0' x2='0' y2='1'><stop offset='0' stop-color='#c4c4c4'/><stop offset='1' stop-color='#8e8e8e'/></linearGradient></defs><rect width='196' height='110' fill='url(#mng)'/><rect x='0' y='0' width='30' height='110' fill='#4a3430' opacity='0.6'/><rect x='168' y='0' width='28' height='110' fill='#4a3430' opacity='0.6'/><path d='M22 110L28 62Q62 56 98 64Q134 56 170 62L180 110Z' fill='url(#mpg)'/><path d='M98 64V110' stroke='#777' stroke-width='0.8'/><path d='M0 56Q15 50 25 60L30 80Q25 95 10 90L0 88Z' fill='#7a5a4a'/><path d='M196 58Q180 52 170 62L165 82Q172 96 188 90L196 88Z' fill='#7a5a4a'/><rect x='41.5' y='1.2' width='112' height='58.2' fill='#e6e6e6'/><text x='47' y='20.9' font-size='14' fill='#111' font-weight='bold' text-anchor='start' font-family='Liberation Sans' textLength='99.5' lengthAdjust='spacingAndGlyphs'>MEN'S BIBLE</text><text x='47' y='49.6' font-size='31' fill='#111' font-weight='bold' text-anchor='start' font-family='Liberation Sans' textLength='98' lengthAdjust='spacingAndGlyphs'>STUDY</text><text x='44.4' y='77.4' font-size='7.4' fill='#f4f4f4' font-weight='normal' text-anchor='start' font-family='Liberation Sans' textLength='106' lengthAdjust='spacingAndGlyphs'>Fairhaven Community Church</text><text x='54' y='87' font-size='7.4' fill='#f4f4f4' font-weight='normal' text-anchor='start' font-family='Liberation Sans' textLength='86' lengthAdjust='spacingAndGlyphs'>Wednesday, 7 - 8:30 pm</text><text x='45' y='96.6' font-size='7.4' fill='#f4f4f4' font-weight='normal' text-anchor='start' font-family='Liberation Sans' textLength='105' lengthAdjust='spacingAndGlyphs'>steve.mason@mailinator.com</text></symbol><symbol id='th_sunday' viewBox='0 0 196 110' preserveAspectRatio='none'><rect width='196' height='110' fill='#22307a'/><rect width='196' height='110' fill='#1c2868' opacity='0.4'/><path d='M0 95L15 90L35 93L55 86L80 91L100 87L125 92L150 85L175 90L196 84V110H0Z' fill='#3d4b9c'/><path d='M0 102L25 97L50 100L75 95L100 99L130 94L160 99L196 95V110H0Z' fill='#6670c2'/><path d='M91.5 5L94.5 8.5L97.5 4L100.5 8.5L103.5 5L102.5 11H92.5Z' fill='#f0b030'/><circle cx='15' cy='5' r='1.3' fill='#f0b030'/><circle cx='41' cy='9' r='1.2' fill='#f0b030'/><circle cx='178' cy='6' r='1.4' fill='#f0b030'/><circle cx='81' cy='9' r='0.8' fill='#f0b030'/><circle cx='112' cy='9' r='0.8' fill='#f0b030'/><text x='41.7' y='26.2' font-size='10.5' fill='#f4f4f4' font-weight='bold' text-anchor='start' font-family='Liberation Sans' textLength='110' lengthAdjust='spacingAndGlyphs'>SUNDAY SCHOOL</text><text x='70.2' y='66.8' font-size='7.2' fill='#f0f0f0' font-weight='normal' text-anchor='start' font-family='Liberation Sans' textLength='53.5' lengthAdjust='spacingAndGlyphs'>Sundays, 8 am</text><text x='40' y='77.7' font-size='7.2' fill='#f0f0f0' font-weight='normal' text-anchor='start' font-family='Liberation Sans' textLength='114' lengthAdjust='spacingAndGlyphs'>Fairhaven Community Church</text></symbol><symbol id='th_countdown' viewBox='0 0 196 110' preserveAspectRatio='none'><defs><linearGradient id='cdg' x1='0' y1='0' x2='0' y2='1'><stop offset='0' stop-color='#4a8ec0'/><stop offset='0.18' stop-color='#5eaed8'/><stop offset='0.55' stop-color='#1d4876'/><stop offset='1' stop-color='#0a1a30'/></linearGradient><radialGradient id='cdv' cx='0.5' cy='0.5' r='0.8'><stop offset='0.65' stop-color='#000' stop-opacity='0'/><stop offset='1' stop-color='#000' stop-opacity='0.3'/></radialGradient><filter id='cdb' x='-50%' y='-50%' width='200%' height='200%'><feGaussianBlur stdDeviation='1.6'/></filter></defs><rect width='196' height='110' fill='url(#cdg)'/><g filter='url(#cdb)' fill='#6a9ec8' opacity='0.5'><ellipse cx='35' cy='62' rx='12' ry='5'/><ellipse cx='150' cy='98' rx='12' ry='6'/><ellipse cx='80' cy='90' rx='8' ry='4'/></g><g filter='url(#cdb)' stroke='#a6cfe8' stroke-width='4' stroke-linecap='round' opacity='0.8'><path d='M130 36L127 74M111 45L147 66M111 65L147 45'/></g><rect width='196' height='110' fill='url(#cdv)'/><circle cx='97' cy='55' r='18.5' fill='#a4a4a4'/><path d='M90 45.5L107 55L90 64.5Z' fill='#1f4a78'/></symbol><symbol id='th_welcome' viewBox='0 0 196 110' preserveAspectRatio='none'><rect width='196' height='110' fill='#0e0e0e'/><text x='98' y='62' font-size='20' fill='#e8e8e8' font-weight='bold' text-anchor='middle' font-family='Liberation Sans' textLength='100' lengthAdjust='spacingAndGlyphs'>WELCOME</text></symbol><symbol id='th_bibleart' viewBox='0 0 196 110' preserveAspectRatio='none'><defs><linearGradient id='bag' x1='0' x2='1'><stop offset='0' stop-color='#c8c8c4'/><stop offset='0.45' stop-color='#9a9a96'/><stop offset='0.75' stop-color='#1a1a1a'/><stop offset='1' stop-color='#050505'/></linearGradient></defs><rect width='196' height='110' fill='url(#bag)'/><path d='M0 60Q30 40 60 55L110 62Q130 70 140 110H0Z' fill='#6a8a98' opacity='0.7'/><path d='M0 80Q40 70 80 80L120 85L130 110H0Z' fill='#8a7a3a'/><path d='M5 30L25 20L40 45L30 70L10 75Z' fill='#d8c8b8' opacity='0.8'/><rect x='118' y='30' width='55' height='5' fill='#d8d8d8'/><rect x='108' y='42' width='75' height='16' fill='#a8a8a8' opacity='0.8'/><rect x='112' y='64' width='68' height='6' fill='#c8c8c8'/></symbol><symbol id='th_contact' viewBox='0 0 196 110' preserveAspectRatio='none'><defs><linearGradient id='ccg' x1='0' y1='0' x2='0' y2='1'><stop offset='0' stop-color='#d8eeea'/><stop offset='1' stop-color='#f0d0a8'/></linearGradient></defs><rect width='196' height='110' fill='url(#ccg)'/><rect width='196' height='7' fill='#6ab8c8'/><path d='M22 5L38 5L45 60L30 40Z' fill='#4a9ab8' opacity='0.7'/><path d='M158 10L170 8L178 65L165 60Z' fill='#4a9ab8' opacity='0.7'/><rect x='45' y='8' width='120' height='92' fill='#ece6de'/><rect x='62' y='16' width='75' height='10' fill='#3a6ac0' opacity='0.8'/><rect x='58' y='34' width='82' height='5' fill='#5a7aa0' opacity='0.7'/><rect x='58' y='42' width='35' height='4' fill='#5a7aa0' opacity='0.7'/><rect x='58' y='56' width='30' height='4' fill='#5a7aa0' opacity='0.7'/><rect x='58' y='63' width='40' height='4' fill='#5a7aa0' opacity='0.7'/><rect x='58' y='70' width='35' height='4' fill='#5a7aa0' opacity='0.7'/></symbol><symbol id='th_social' viewBox='0 0 196 110' preserveAspectRatio='none'><defs><radialGradient id='sog' cx='0.6' cy='0.5' r='0.7'><stop offset='0' stop-color='#efefee'/><stop offset='1' stop-color='#c4c4c2'/></radialGradient></defs><rect width='196' height='110' fill='url(#sog)'/><rect x='46' y='10' width='18' height='18' rx='4' fill='#2e7a2e'/><path d='M46 42Q55 52 64 40L60 62Q52 58 46 42Z' fill='#2e7a2e'/><path d='M46 82H56L60 72H64V98H46Z' fill='#2e7a2e'/><rect x='72' y='14' width='30' height='5' fill='#4a9a4a'/><rect x='72' y='22' width='50' height='3' fill='#aaa'/><rect x='72' y='46' width='28' height='5' fill='#4a9a4a'/><rect x='72' y='54' width='50' height='3' fill='#aaa'/><rect x='72' y='82' width='30' height='5' fill='#4a9a4a'/><rect x='72' y='90' width='110' height='3' fill='#aaa'/></symbol><symbol id='th_call' viewBox='0 0 196 110' preserveAspectRatio='none'><rect width='196' height='110' fill='#0e1a28'/><rect x='60' y='0' width='130' height='20' fill='#8a9aa8' opacity='0.45'/><ellipse cx='100' cy='82' rx='20' ry='8' fill='#c8d0d8' opacity='0.7'/><rect x='0' y='70' width='196' height='40' fill='#1a2a3a' opacity='0.5'/><rect x='20' y='13' width='170' height='4.5' fill='#c8d0d8' opacity='0.55'/><rect x='8' y='25' width='145' height='4.5' fill='#c8d0d8' opacity='0.55'/><rect x='8' y='37' width='150' height='4.5' fill='#c8d0d8' opacity='0.55'/><rect x='8' y='49' width='140' height='4.5' fill='#c8d0d8' opacity='0.55'/><rect x='8' y='71' width='60' height='4' fill='#c8d0d8' opacity='0.55'/></symbol><symbol id='th_prayer' viewBox='0 0 196 110' preserveAspectRatio='none'><rect width='196' height='110' fill='#2a3438'/><rect y='40' width='196' height='70' fill='#3a4a30' opacity='0.6'/><rect x='60' y='10' width='110' height='9' fill='#c8c8c8' opacity='0.85'/></symbol><symbol id='th_cross' viewBox='0 0 196 110' preserveAspectRatio='none'><svg width='196' height='110' viewBox='0 148 1000 561' preserveAspectRatio='none' style='filter:brightness(1.05)'><use href='#church' width='1000' height='857'/></svg></symbol></svg>
<svg style="left:33px;top:248px" width="44" height="25" viewBox="0 0 196 110" preserveAspectRatio="none"><use href="#th_welcome"/></svg>
<div class="t" style="left:87.3px;top:260.5px;font-size:17.01px;color:#f0f0f0;-webkit-text-stroke:0.3px #f0f0f0;transform:scaleX(0.953);">Welcome</div>
<div class="t" style="left:160.5px;top:260px;font-size:18.02px;color:#a4a4a4;transform:scaleX(0.847);">5s</div>
<svg style="left:33px;top:285px" width="44" height="25" viewBox="0 0 196 110" preserveAspectRatio="none"><use href="#th_bibleart"/></svg>
<div class="t" style="left:86.31px;top:298.5px;font-size:17.01px;color:#f0f0f0;-webkit-text-stroke:0.3px #f0f0f0;transform:scaleX(0.987);">Bible Art</div>
<div class="t" style="left:155.6px;top:298px;font-size:18.02px;color:#a4a4a4;transform:scaleX(0.873);">5s</div>
<svg style="left:33px;top:323px" width="44" height="25" viewBox="0 0 196 110" preserveAspectRatio="none"><use href="#th_contact"/></svg>
<div class="t" style="left:87.3px;top:336.5px;font-size:17.01px;color:#f0f0f0;-webkit-text-stroke:0.3px #f0f0f0;transform:scaleX(0.957);">Contact Card</div>
<div class="t" style="left:188.84px;top:336px;font-size:18.02px;color:#a4a4a4;transform:scaleX(0.856);">15s</div>
<svg style="left:33px;top:360px" width="44" height="25" viewBox="0 0 196 110" preserveAspectRatio="none"><use href="#th_social"/></svg>
<div class="t" style="left:87.3px;top:373.5px;font-size:17.01px;color:#f0f0f0;-webkit-text-stroke:0.3px #f0f0f0;transform:scaleX(0.940);">Social Media</div>
<div class="t" style="left:186px;top:373px;font-size:18.02px;color:#a4a4a4;transform:scaleX(0.810);">6s</div>
<svg style="left:33px;top:398px" width="44" height="25" viewBox="0 0 196 110" preserveAspectRatio="none"><use href="#th_giving"/></svg>
<div class="t" style="left:87.3px;top:410.5px;font-size:17.01px;color:#f0f0f0;-webkit-text-stroke:0.3px #f0f0f0;transform:scaleX(0.963);">Online Giving</div>
<div class="t" style="left:191.2px;top:410px;font-size:18.02px;color:#a4a4a4;transform:scaleX(0.841);">9s</div>
<svg style="left:33px;top:435px" width="44" height="25" viewBox="0 0 196 110" preserveAspectRatio="none"><use href="#th_worship"/></svg>
<div class="t" style="left:87.3px;top:448.5px;font-size:17.01px;color:#f0f0f0;-webkit-text-stroke:0.3px #f0f0f0;transform:scaleX(0.977);">Worship Night Annou…</div>
<div class="t" style="left:264.2px;top:448px;font-size:18.02px;color:#a4a4a4;transform:scaleX(0.841);">9s</div>
<svg style="left:33px;top:473px" width="44" height="25" viewBox="0 0 196 110" preserveAspectRatio="none"><use href="#th_announce"/></svg>
<div class="t" style="left:87.3px;top:486.5px;font-size:17.01px;color:#f0f0f0;-webkit-text-stroke:0.3px #f0f0f0;transform:scaleX(0.980);">Announcement</div>
<div class="t" style="left:205.8px;top:486px;font-size:18.02px;color:#a4a4a4;transform:scaleX(0.841);">5s</div>
<svg style="left:33px;top:510px" width="44" height="25" viewBox="0 0 196 110" preserveAspectRatio="none"><use href="#th_signals"/></svg>
<svg style="left:46px;top:514px" width="18" height="18"><circle cx="9" cy="9" r="8.7" fill="#b4b4b4"/><path d="M6.3 4.8L13 9L6.3 13.2Z" fill="#000"/></svg>
<div class="t" style="left:86.33px;top:523.5px;font-size:17.01px;color:#f0f0f0;-webkit-text-stroke:0.3px #f0f0f0;transform:scaleX(0.970);">Proclaim Signals -…</div>
<div class="t" style="left:240.72px;top:523px;font-size:18.02px;color:#a4a4a4;transform:scaleX(0.875);">1:20</div>
<svg style="left:33px;top:548px" width="44" height="25" viewBox="0 0 196 110" preserveAspectRatio="none"><use href="#th_bulletin"/></svg>
<div class="t" style="left:86.27px;top:560.5px;font-size:17.01px;color:#f0f0f0;-webkit-text-stroke:0.3px #f0f0f0;transform:scaleX(1.033);">Bulletin</div>
<div class="t" style="left:150.6px;top:560px;font-size:18.02px;color:#a4a4a4;transform:scaleX(0.825);">7s</div>
<svg style="left:33px;top:585px" width="44" height="25" viewBox="0 0 196 110" preserveAspectRatio="none"><use href="#th_mens"/></svg>
<div class="t" style="left:86.35px;top:598.5px;font-size:17.01px;color:#f0f0f0;-webkit-text-stroke:0.3px #f0f0f0;transform:scaleX(0.955);">Men's Bible Study</div>
<div class="t" style="left:223px;top:598px;font-size:18.02px;color:#a4a4a4;transform:scaleX(0.831);">9s</div>
<svg style="left:33px;top:623px" width="44" height="25" viewBox="0 0 196 110" preserveAspectRatio="none"><use href="#th_sunday"/></svg>
<div class="t" style="left:87.3px;top:636.5px;font-size:17.01px;color:#f0f0f0;-webkit-text-stroke:0.3px #f0f0f0;transform:scaleX(0.950);">Sunday School</div>
<div class="t" style="left:203px;top:636px;font-size:18.02px;color:#a4a4a4;transform:scaleX(0.831);">7s</div>
<svg style="left:33px;top:660px" width="44" height="25" viewBox="0 0 196 110" preserveAspectRatio="none"><use href="#th_cross"/></svg>
<div class="t" style="left:87.3px;top:673.5px;font-size:17.01px;color:#f2e600;-webkit-text-stroke:0.3px #f2e600;transform:scaleX(0.922);">Cross-stage</div>
<div class="t" style="left:177.9px;top:673px;font-size:18.02px;color:#a4a4a4;transform:scaleX(0.825);">5s</div>
<svg style="left:308px;top:516px" width="14" height="14" viewBox="0 0 14 14"><circle cx="7" cy="7" r="7" fill="#1e8ee6"/><path d="M5 3.5L10.5 7L5 10.5Z" fill="#111"/></svg>
<svg style="left:10.3px;top:708.3px" width="13" height="7" viewBox="0 0 13 7"><path d="M0 0H13L6.5 7Z" fill="#e6e6e6"/></svg>
<div class="t" style="left:33px;top:712px;font-size:13.95px;color:#dadada;font-weight:bold;transform:scaleX(0.954);">WARM-UP</div>
<div class="t" style="left:107.59px;top:711px;font-size:17.3px;color:#a6a6a6;transform:scaleX(0.909);">1:01</div>
<svg style="left:33px;top:735px" width="44" height="25" viewBox="0 0 196 110" preserveAspectRatio="none"><use href="#th_countdown"/></svg>
<svg style="left:46px;top:738.5px" width="18" height="18"><circle cx="9" cy="9" r="8.7" fill="#aab4bc" opacity="0.9"/><path d="M6.3 4.8L13 9L6.3 13.2Z" fill="#1a3a5a"/></svg>
<div class="t" style="left:87.3px;top:748.5px;font-size:17.01px;color:#f0f0f0;-webkit-text-stroke:0.3px #f0f0f0;transform:scaleX(0.978);">Countdown 1 min</div>
<div class="t" style="left:222.12px;top:748px;font-size:18.02px;color:#a4a4a4;transform:scaleX(0.875);">1:01</div>
<svg style="left:308px;top:741px" width="14" height="14" viewBox="0 0 14 14"><circle cx="7" cy="7" r="7" fill="#1e8ee6"/><path d="M5 3.5L10.5 7L5 10.5Z" fill="#111"/></svg>
<div style="left:3px;top:767.2px;width:334px;height:1.6px;background:#1e8ee0;"></div>
<svg style="left:10.3px;top:783.6px" width="13" height="7" viewBox="0 0 13 7"><path d="M0 0H13L6.5 7Z" fill="#e6e6e6"/></svg>
<div class="t" style="left:33px;top:787px;font-size:13.95px;color:#dadada;font-weight:bold;transform:scaleX(0.894);">SERVICE</div>
<div class="t" style="left:216.4px;top:786px;font-size:17.44px;color:#e2e2e2;transform:scaleX(0.863);">9:30 AM</div>
<svg style="left:33px;top:810px" width="44" height="25" viewBox="0 0 196 110" preserveAspectRatio="none"><use href="#th_call"/></svg>
<div class="t" style="left:87.3px;top:823.5px;font-size:17.01px;color:#f0f0f0;-webkit-text-stroke:0.3px #f0f0f0;transform:scaleX(0.955);">Call to Worship</div>
<div style="left:0;top:840px;width:323px;height:18px;overflow:hidden">
<svg style="left:33px;top:8px" width="44" height="25" viewBox="0 0 196 110" preserveAspectRatio="none"><use href="#th_prayer"/></svg>
<div class="t" style="left:86.33px;top:20.5px;font-size:17.01px;color:#f0f0f0;-webkit-text-stroke:0.3px #f0f0f0;transform:scaleX(0.971);">Prayer</div>
</div>
<div style="left:339px;top:90px;width:1580px;height:30px;background:#2e2e2e;"></div>
<div style="left:339px;top:90px;width:79px;height:30px;background:#4a4a4a;"></div>
<div style="left:339px;top:90px;width:79px;height:2.4px;background:#f3e600;"></div>
<div style="left:485px;top:90px;width:1px;height:30px;background:#272727;"></div>
<div style="left:556px;top:90px;width:1px;height:30px;background:#272727;"></div>
<div class="t" style="left:351.6px;top:107px;font-size:14.68px;color:#f3e600;-webkit-text-stroke:0.3px #f3e600;transform:scaleX(1.072);">Content</div>
<div class="t" style="left:431.43px;top:107px;font-size:14.68px;color:#f0f0f0;-webkit-text-stroke:0.3px #f0f0f0;transform:scaleX(1.068);">Notes</div>
<div class="t" style="left:498.3px;top:107px;font-size:14.68px;color:#f0f0f0;-webkit-text-stroke:0.3px #f0f0f0;transform:scaleX(0.952);">Signals</div>
<div style="left:339px;top:120px;width:1580px;height:44px;background:#4a4a4a;"></div>
<div style="left:896px;top:120px;width:2px;height:44px;background:#2e2e2e;"></div>
<div style="left:1083px;top:120px;width:2px;height:44px;background:#2e2e2e;"></div>
<div style="left:1160px;top:120px;width:2px;height:44px;background:#2e2e2e;"></div>
<div style="left:1228px;top:120px;width:2px;height:44px;background:#2e2e2e;"></div>
<div style="left:1400px;top:120px;width:2px;height:44px;background:#2e2e2e;"></div>
<div style="left:1587px;top:120px;width:2px;height:44px;background:#2e2e2e;"></div>
<div style="left:1720px;top:120px;width:2px;height:44px;background:#2e2e2e;"></div>
<div style="left:1862px;top:120px;width:2px;height:44px;background:#2e2e2e;"></div>
<div class="t" style="left:348.65px;top:142px;font-size:18.17px;color:#858585;transform:scaleX(0.951);">Museo Sans</div>
<svg style="left:505.5px;top:140px" width="8.2" height="5" viewBox="0 0 8.2 5"><path d="M0 0H8.2L4.1 5Z" fill="#858585"/></svg>
<div class="t" style="left:528.35px;top:142px;font-size:18.17px;color:#858585;transform:scaleX(0.947);">Normal</div>
<svg style="left:610px;top:140px" width="8.2" height="5" viewBox="0 0 8.2 5"><path d="M0 0H8.2L4.1 5Z" fill="#858585"/></svg>
<div class="t" style="left:636.8px;top:145px;font-size:10.9px;color:#858585;font-family:'Liberation Serif';transform:scaleX(0.929);">T</div>
<div class="t" style="left:643.3px;top:142px;font-size:19.91px;color:#858585;font-family:'Liberation Serif';transform:scaleX(0.875);">T</div>
<div style="left:662.6px;top:129px;width:47px;height:25.5px;border-radius:4px;background:#3c3c3c"></div>
<div class="t" style="left:668.4px;top:142px;font-size:18.17px;color:#6e6e6e;transform:scaleX(0.876);">45</div>
<svg style="left:697.1px;top:135.5px" width="7.5" height="4.5" viewBox="0 0 7.5 4.5"><path d="M0 4.5H7.5L3.75 0Z" fill="#6a6a6a"/></svg>
<svg style="left:697.1px;top:144.5px" width="7.5" height="4.5" viewBox="0 0 7.5 4.5"><path d="M0 0H7.5L3.75 4.5Z" fill="#6a6a6a"/></svg>
<div style="left:755.7px;top:129px;width:46.8px;height:25.5px;border-radius:4px;background:#3c3c3c"></div>
<div class="t" style="left:760.09px;top:142px;font-size:18.17px;color:#6e6e6e;transform:scaleX(0.911);">1.0</div>
<svg style="left:790px;top:135.5px" width="7.5" height="4.5" viewBox="0 0 7.5 4.5"><path d="M0 4.5H7.5L3.75 0Z" fill="#6a6a6a"/></svg>
<svg style="left:790px;top:144.5px" width="7.5" height="4.5" viewBox="0 0 7.5 4.5"><path d="M0 0H7.5L3.75 4.5Z" fill="#6a6a6a"/></svg>
<div style="left:837px;top:129px;width:47.6px;height:25.5px;border-radius:4px;background:#3c3c3c"></div>
<div class="t" style="left:844px;top:142px;font-size:18.17px;color:#6e6e6e;transform:scaleX(0.800);">0</div>
<svg style="left:872.1px;top:135.5px" width="7.5" height="4.5" viewBox="0 0 7.5 4.5"><path d="M0 4.5H7.5L3.75 0Z" fill="#6a6a6a"/></svg>
<svg style="left:872.1px;top:144.5px" width="7.5" height="4.5" viewBox="0 0 7.5 4.5"><path d="M0 0H7.5L3.75 4.5Z" fill="#6a6a6a"/></svg>
<svg style="left:726px;top:133px" width="22" height="18" viewBox="0 0 22 18"><path d="M3.5 2V16" stroke="#858585" stroke-width="1.6"/><path d="M0.5 4.5L3.5 0.8L6.5 4.5ZM0.5 13.5L3.5 17.2L6.5 13.5Z" fill="#858585"/></svg>
<div class="t" style="left:735.5px;top:142px;font-size:16.28px;color:#858585;transform:scaleX(1.091);">A</div>
<div class="t" style="left:811.8px;top:137.5px;font-size:11.63px;color:#858585;transform:scaleX(1.243);">AV</div>
<svg style="left:811.5px;top:143.5px" width="19" height="7" viewBox="0 0 19 7"><path d="M2.5 3.5H16.5" stroke="#858585" stroke-width="1.5"/><path d="M0.3 3.5L3.5 0.5V6.5ZM18.7 3.5L15.5 0.5V6.5Z" fill="#858585"/></svg>
<div class="t" style="left:918.96px;top:142.5px;font-size:21.66px;color:#7e7e7e;font-weight:bold;transform:scaleX(1.036);">B</div>
<div class="t" style="left:965.45px;top:142.5px;font-size:21.66px;color:#7e7e7e;font-style:italic;font-family:'Liberation Serif';transform:scaleX(0.950);">I</div>
<div class="t" style="left:1000.5px;top:142.5px;font-size:21.66px;color:#7e7e7e;font-family:'Liberation Serif';transform:scaleX(0.923);">T</div>
<div class="t" style="left:1012.5px;top:144.5px;font-size:15.26px;color:#7e7e7e;font-family:'Liberation Serif';transform:scaleX(0.900);">T</div>
<div class="t" style="left:1040.4px;top:142.5px;font-size:21.66px;color:#7e7e7e;font-family:'Liberation Serif';transform:scaleX(0.984);">TT</div>
<svg style="left:1105px;top:135px" width="20.5" height="17" viewBox="0 0 20.5 17"><path d="M0 0.8H20M0 4.6H15M0 8.4H20M0 12.2H15M0 16H20" stroke="#858585" stroke-width="1.3"/></svg>
<svg style="left:1136.3px;top:140px" width="8.3" height="5" viewBox="0 0 8.3 5"><path d="M0 0H8.3L4.15 5Z" fill="#858585"/></svg>
<div style="left:1177px;top:132px;width:21px;height:20px;background:#7c7c7c;"></div>
<svg style="left:1204.6px;top:140px" width="8.4" height="5" viewBox="0 0 8.4 5"><path d="M0 0H8.4L4.2 5Z" fill="#858585"/></svg>
<svg style="left:1738.5px;top:131.5px" width="26" height="20" viewBox="0 0 26 20"><rect x="2.2" y="2" width="21.8" height="16" fill="none" stroke="#dedede" stroke-width="1.8"/><circle cx="2.2" cy="2" r="2" fill="#dedede"/><circle cx="24" cy="2" r="2" fill="#dedede"/><circle cx="2.2" cy="18" r="2" fill="#dedede"/><circle cx="24" cy="18" r="2" fill="#dedede"/></svg>
<div class="t" style="left:1747px;top:142px;font-size:12.5px;color:#dedede;">A</div>
<svg style="left:1775.9px;top:140px" width="8.4" height="5" viewBox="0 0 8.4 5"><path d="M0 0H8.4L4.2 5Z" fill="#dedede"/></svg>
<svg style="left:1800.5px;top:131px" width="27" height="21" viewBox="0 0 27 21"><circle cx="14.5" cy="3.2" r="2.1" fill="#dedede"/><path d="M1.5 19.5L8.5 7.5L14 13.5L18.8 10L24.8 19.5Z" fill="none" stroke="#dedede" stroke-width="1.6" stroke-linejoin="miter"/></svg>
<svg style="left:1837.8px;top:140px" width="8.4" height="5" viewBox="0 0 8.4 5"><path d="M0 0H8.4L4.2 5Z" fill="#dedede"/></svg>
<svg style="left:1881px;top:132px" width="21" height="19" viewBox="0 0 21 19"><path d="M5 4.2A8 8 0 1 1 11.2 17.3" fill="none" stroke="#dedede" stroke-width="1.6"/><path d="M9.8 17.2A8 8 0 0 1 3.2 10.5" fill="none" stroke="#dedede" stroke-width="1.6" stroke-dasharray="2.2 1.6"/><path d="M2.2 3.2L7.2 2.4L5.6 7.5Z" fill="#dedede"/></svg>
<div class="t" style="left:1243.61px;top:142px;font-size:18.17px;color:#808080;transform:scaleX(0.889);">Effects</div>
<svg style="left:1299px;top:140px" width="8" height="5" viewBox="0 0 8 5"><path d="M0 0H8L4 5Z" fill="#808080"/></svg>
<div class="t" style="left:1327.2px;top:142px;font-size:18.17px;color:#808080;transform:scaleX(0.871);">Styles</div>
<svg style="left:1376px;top:140px" width="8" height="5" viewBox="0 0 8 5"><path d="M0 0H8L4 5Z" fill="#808080"/></svg>
<div class="t" style="left:1416px;top:142px;font-size:17.15px;color:#ececec;-webkit-text-stroke:0.3px #ececec;transform:scaleX(0.942);">Guides</div>
<svg style="left:1472.4px;top:140px" width="8.6" height="5" viewBox="0 0 8.6 5"><path d="M0 0H8.6L4.3 5Z" fill="#e6e6e6"/></svg>
<div class="t" style="left:1500.7px;top:142px;font-size:18.17px;color:#808080;transform:scaleX(0.882);">Arrange</div>
<svg style="left:1564px;top:140px" width="8" height="5" viewBox="0 0 8 5"><path d="M0 0H8L4 5Z" fill="#808080"/></svg>
<div style="left:1598px;top:125px;width:112px;height:35px;border-radius:5px;background:#2e2e2e"></div>
<div class="t" style="left:1602.02px;top:142px;font-size:17.15px;color:#f0f0f0;-webkit-text-stroke:0.3px #f0f0f0;transform:scaleX(0.977);">Background</div>
<svg style="left:1696px;top:139.5px" width="9" height="5.5" viewBox="0 0 9 5.5"><path d="M0 5.5H9L4.5 0Z" fill="#f0f0f0"/></svg>
<div style="left:339px;top:164px;width:789px;height:671px;background:#2e2e2e;"></div>
<div style="left:1128px;top:164px;width:3px;height:694px;background:#4a4a4a;"></div>
<div style="left:360px;top:195px;width:738px;height:40px;border-radius:5px 5px 0 0;background:#4a4a4a"></div>
<div style="left:498px;top:195px;width:2px;height:40px;background:#3e3e3e;"></div>
<div style="left:599px;top:195px;width:2px;height:40px;background:#3e3e3e;"></div>
<div style="left:700px;top:195px;width:2px;height:40px;background:#3e3e3e;"></div>
<div class="t" style="left:376.37px;top:216px;font-size:21.37px;color:#7c7c7c;font-weight:bold;transform:scaleX(1.029);">B</div>
<div class="t" style="left:421.62px;top:216px;font-size:21.37px;color:#7c7c7c;font-style:italic;font-family:'Liberation Serif';transform:scaleX(1.222);">I</div>
<div class="t" style="left:458.8px;top:216px;font-size:21.37px;color:#7c7c7c;font-family:'Liberation Serif';transform:scaleX(0.885);">T</div>
<div class="t" style="left:470px;top:217.5px;font-size:14.97px;color:#7c7c7c;font-family:'Liberation Serif';transform:scaleX(0.956);">T</div>
<svg style="left:514px;top:204px" width="25" height="22" viewBox="0 0 25 22"><rect x="0.5" y="0.5" width="3" height="3" fill="#7c7c7c"/><rect x="0.5" y="9.5" width="3" height="3" fill="#7c7c7c"/><rect x="0.5" y="18.5" width="3" height="3" fill="#7c7c7c"/><path d="M9 2H24.5M9 11H24.5M9 20H24.5" stroke="#7c7c7c" stroke-width="1.5"/></svg>
<svg style="left:557px;top:204px" width="25" height="22" viewBox="0 0 25 22"><path d="M9 2H24.5M9 11H24.5M9 20H24.5" stroke="#7c7c7c" stroke-width="1.5"/><path d="M1.5 1.2L2.8 0.3V5" stroke="#7c7c7c" stroke-width="1" fill="none"/><path d="M0.8 9Q1.5 8 2.5 8Q4 8.3 3.5 9.8L0.8 13H4.2" stroke="#7c7c7c" stroke-width="1" fill="none"/><path d="M0.8 17H3.8L2 19Q4.2 19 4 20.5Q3.6 22 0.8 21.5" stroke="#7c7c7c" stroke-width="1" fill="none"/></svg>
<svg style="left:618.5px;top:205px" width="21" height="21" viewBox="0 0 21 21"><path d="M3.5 1H16M8 5H20.5M8 9H20.5M8 13H20.5M3.5 20H16" stroke="#7c7c7c" stroke-width="1.6"/><path d="M0.5 9L4.5 6V12Z" fill="#7c7c7c"/></svg>
<svg style="left:660.5px;top:205px" width="21" height="21" viewBox="0 0 21 21"><path d="M3.5 1H16M8 5H20.5M8 9H20.5M8 13H20.5M3.5 20H16" stroke="#7c7c7c" stroke-width="1.6"/><path d="M5 9L1 6V12Z" fill="#7c7c7c"/></svg>
<svg style="left:719.5px;top:205px" width="23" height="21" viewBox="0 0 23 21"><path d="M0.3 6L4 9.5L0.3 13Z" fill="#7c7c7c"/><rect x="8" y="0.5" width="14" height="9" fill="#7c7c7c"/><rect x="8" y="11.5" width="14" height="9" fill="#7c7c7c"/></svg>
<svg style="left:762px;top:207.5px" width="20.5" height="17" viewBox="0 0 20.5 17"><rect x="0" y="0.5" width="20.5" height="3.6" fill="#7c7c7c"/><rect x="0" y="6.5" width="20.5" height="3.6" fill="#7c7c7c"/><rect x="0" y="12.5" width="20.5" height="3.6" fill="#666"/></svg>
<div class="t" style="left:806.2px;top:211px;font-size:11.92px;color:#7c7c7c;font-weight:bold;transform:scaleX(0.966);">AB</div>
<div class="t" style="left:806.2px;top:222px;font-size:11.92px;color:#7c7c7c;font-weight:bold;transform:scaleX(0.778);">C</div>
<div style="left:815px;top:223.5px;width:5.5px;height:2.5px;background:#7c7c7c;"></div>
<svg style="left:846.5px;top:206px" width="22" height="18" viewBox="0 0 22 18"><path d="M0 1H4M7 1H21M0 9H13M16 9H21M0 17H6M9 17H21" stroke="#606060" stroke-width="1.3"/><rect x="0" y="7.3" width="13" height="3.5" fill="#606060"/></svg>
<svg style="left:880.9px;top:212.4px" width="9.3" height="5.6" viewBox="0 0 9.3 5.6"><path d="M0 0H9.3L4.65 5.6Z" fill="#6e6e6e"/></svg>
<svg style="left:1062px;top:202.5px" width="26" height="26" viewBox="0 0 26 26"><circle cx="12.75" cy="12.9" r="11.8" fill="none" stroke="#7c7c7c" stroke-width="1.3"/><circle cx="12.75" cy="7.5" r="1.6" fill="#7c7c7c"/><path d="M10.5 10.5H13.8V17.5H15V18.8H10.5V17.5H11.7V11.8H10.5Z" fill="#7c7c7c"/></svg>
<div style="left:360px;top:236px;width:738px;height:374px;border-radius:0 0 5px 5px;background:#111111"></div>
<div class="t" style="left:366.4px;top:251px;font-size:17.59px;color:#8c8c8c;font-style:italic;transform:scaleX(0.900);">Type text here.</div>
<svg style="left:1104px;top:191px" width="9" height="5" viewBox="0 0 9 5"><path d="M0 5H9L4.5 0Z" fill="#555"/></svg>
<svg style="left:1104px;top:802.5px" width="9" height="5" viewBox="0 0 9 5"><path d="M0 0H9L4.5 5Z" fill="#555"/></svg>
<div style="left:359px;top:636px;width:15px;height:15px;border:1px solid #5c5c5c;background:#2a2a2a"></div>
<div style="left:359px;top:668px;width:15px;height:15px;border:1px solid #5c5c5c;background:#2a2a2a"></div>
<div style="left:359px;top:700px;width:15px;height:15px;border:1px solid #5c5c5c;background:#2a2a2a"></div>
<div style="left:359px;top:732px;width:15px;height:15px;border:1px solid #444;background:#2a2a2a"></div>
<div style="left:627px;top:668px;width:15px;height:15px;border:1px solid #444;background:#2a2a2a"></div>
<div class="t" style="left:384.2px;top:643px;font-size:17.59px;color:#f0f0f0;-webkit-text-stroke:0.3px #f0f0f0;transform:scaleX(0.947);">Show a countdown clock</div>
<div class="t" style="left:384.2px;top:675px;font-size:17.59px;color:#f0f0f0;-webkit-text-stroke:0.3px #f0f0f0;transform:scaleX(0.917);">Auto-advance every</div>
<div class="t" style="left:533.4px;top:674.5px;font-size:18.6px;color:#2196f3;transform:scaleX(0.890);">3</div>
<div class="t" style="left:547.3px;top:675px;font-size:17.59px;color:#f0f0f0;-webkit-text-stroke:0.3px #f0f0f0;transform:scaleX(0.906);">seconds</div>
<div class="t" style="left:651.43px;top:674.5px;font-size:18.6px;color:#6e6e6e;transform:scaleX(0.866);">Repeat</div>
<div class="t" style="left:383.28px;top:707px;font-size:17.59px;color:#f0f0f0;-webkit-text-stroke:0.3px #f0f0f0;transform:scaleX(0.916);">Use</div>
<div class="t" style="left:415.45px;top:706.5px;font-size:18.6px;color:#2196f3;transform:scaleX(0.951);">no</div>
<div class="t" style="left:440.6px;top:707px;font-size:17.59px;color:#f0f0f0;-webkit-text-stroke:0.3px #f0f0f0;">transition</div>
<div class="t" style="left:384.2px;top:738.5px;font-size:18.6px;color:#6a6a6a;transform:scaleX(0.898);">Shuffle</div>
<div class="t" style="left:364px;top:798.5px;font-size:16.57px;color:#f0f0f0;-webkit-text-stroke:0.3px #f0f0f0;transform:scaleX(0.970);">Send to sign feed</div>
<svg style="left:494.2px;top:794.7px" width="8.8" height="5.8" viewBox="0 0 8.8 5.8"><path d="M0 0H8.8L4.4 5.8Z" fill="#e6e6e6"/></svg>
<div style="left:339px;top:835px;width:789px;height:23px;background:#4a4a4a;"></div>
<div class="t" style="left:348.8px;top:847px;font-size:14.68px;color:#c6c6c6;font-style:italic;transform:scaleX(0.826);">Last edited by Karl Klassen, Today 3:44 PM</div>
<div style="left:1131px;top:164px;width:788px;height:671px;background:#2e2e2e;"></div>
<div style="left:1142px;top:198px;width:758px;height:426px;overflow:hidden"><svg style="left:0;top:-112.2px" width="758" height="649.6" viewBox="0 0 1000 857"><use href="#church" width="1000" height="857"/></svg></div>
<svg style="left:1905.6px;top:191px" width="9.4" height="5" viewBox="0 0 9.4 5"><path d="M0 5H9.4L4.7 0Z" fill="#555"/></svg>
<svg style="left:1905.3px;top:777.5px" width="9.4" height="5" viewBox="0 0 9.4 5"><path d="M0 0H9.4L4.7 5Z" fill="#555"/></svg>
<div style="left:1131px;top:835px;width:788px;height:23px;background:#4a4a4a;"></div>
<div class="t" style="left:1140.01px;top:845px;font-size:14.53px;color:#b4b4b4;transform:scaleX(0.894);">Mouse location</div>
<div class="t" style="left:1720.9px;top:845px;font-size:14.53px;color:#b4b4b4;transform:scaleX(0.807);">X: 982.9</div>
<div class="t" style="left:1770.3px;top:845px;font-size:14.53px;color:#b4b4b4;transform:scaleX(0.802);">Y: 41.5</div>
<div class="t" style="left:1818.2px;top:845px;font-size:14.53px;color:#b4b4b4;transform:scaleX(0.812);">W: 1920</div>
<div class="t" style="left:1867.16px;top:845px;font-size:14.53px;color:#b4b4b4;transform:scaleX(0.838);">H: 1080</div>
<div style="left:1342px;top:164px;width:338px;height:609px;background:#4a4a4a;"></div>
<div style="left:1342px;top:769px;width:338px;height:4px;background:#1e1e1e;"></div>
<div class="t" style="left:1351.54px;top:186.5px;font-size:16.72px;color:#f0f0f0;-webkit-text-stroke:0.3px #f0f0f0;transform:scaleX(0.963);">Browse Media</div>
<div class="t" style="left:1351.45px;top:218.5px;font-size:16.72px;color:#f0f0f0;-webkit-text-stroke:0.3px #f0f0f0;transform:scaleX(1.050);">Import...</div>
<div style="left:1342px;top:238.6px;width:338px;height:1.3px;background:#2e2e2e;"></div>
<div class="t" style="left:1352.5px;top:256.5px;font-size:12.79px;color:#f0f0f0;font-weight:bold;transform:scaleX(0.904);">IMAGE</div>
<svg style="left:0;top:0" width="0" height="0"><defs><linearGradient id='sw5' x1='0' y1='0' x2='0' y2='1'><stop offset='0' stop-color='#62cdb0'/><stop offset='1' stop-color='#0a4a3c'/></linearGradient><radialGradient id='sw6' cx='0.5' cy='0.3' r='0.75'><stop offset='0' stop-color='#3cb0a0'/><stop offset='1' stop-color='#1a7890'/></radialGradient><linearGradient id='sw7' x1='0' y1='0' x2='0' y2='1'><stop offset='0' stop-color='#6a9ed8'/><stop offset='1' stop-color='#2a3488'/></linearGradient><linearGradient id='sw8' x1='0' y1='0' x2='0' y2='1'><stop offset='0' stop-color='#d42424'/><stop offset='1' stop-color='#780808'/></linearGradient><radialGradient id='sw4' cx='0.5' cy='0.5' r='0.7'><stop offset='0' stop-color='#e4d6b0'/><stop offset='0.7' stop-color='#d2bc88'/><stop offset='1' stop-color='#a08050'/></radialGradient><radialGradient id='sw3' cx='0.6' cy='0.3' r='0.9'><stop offset='0' stop-color='#d4d0c6'/><stop offset='1' stop-color='#b8b4a4'/></radialGradient></defs></svg>
<svg style="left:1352px;top:271px" width="55.5" height="31" viewBox="0 0 55.5 31"><rect width='55.5' height='31' fill='#ececec'/><rect x='8.60' y='0.00' width='8.60' height='8.60' fill='#cdcdcd'/><rect x='25.80' y='0.00' width='8.60' height='8.60' fill='#cdcdcd'/><rect x='43.00' y='0.00' width='8.60' height='8.60' fill='#cdcdcd'/><rect x='0.00' y='8.60' width='8.60' height='8.60' fill='#cdcdcd'/><rect x='17.20' y='8.60' width='8.60' height='8.60' fill='#cdcdcd'/><rect x='34.40' y='8.60' width='8.60' height='8.60' fill='#cdcdcd'/><rect x='51.60' y='8.60' width='8.60' height='8.60' fill='#cdcdcd'/><rect x='8.60' y='17.20' width='8.60' height='8.60' fill='#cdcdcd'/><rect x='25.80' y='17.20' width='8.60' height='8.60' fill='#cdcdcd'/><rect x='43.00' y='17.20' width='8.60' height='8.60' fill='#cdcdcd'/><rect x='0.00' y='25.80' width='8.60' height='8.60' fill='#cdcdcd'/><rect x='17.20' y='25.80' width='8.60' height='8.60' fill='#cdcdcd'/><rect x='34.40' y='25.80' width='8.60' height='8.60' fill='#cdcdcd'/><rect x='51.60' y='25.80' width='8.60' height='8.60' fill='#cdcdcd'/></svg>
<svg style="left:1352px;top:312px" width="55.5" height="31" viewBox="0 0 55.5 31"><rect width='55.5' height='31' fill='url(#sw6)'/></svg>
<svg style="left:1418px;top:271px" width="55.5" height="31" viewBox="0 0 55.5 31"><rect width='55.5' height='31' fill='#ebebeb'/></svg>
<svg style="left:1418px;top:312px" width="55.5" height="31" viewBox="0 0 55.5 31"><rect width='55.5' height='31' fill='url(#sw7)'/></svg>
<svg style="left:1483.5px;top:271px" width="55.5" height="31" viewBox="0 0 55.5 31"><rect width='55.5' height='31' fill='url(#sw3)'/></svg>
<svg style="left:1483.5px;top:312px" width="55.5" height="31" viewBox="0 0 55.5 31"><rect width='55.5' height='31' fill='url(#sw8)'/></svg>
<svg style="left:1549px;top:271px" width="55.5" height="31" viewBox="0 0 55.5 31"><rect width='55.5' height='31' fill='url(#sw4)'/></svg>
<svg style="left:1549px;top:312px" width="55.5" height="31" viewBox="0 0 55.5 31"><rect width='55.5' height='31' fill='#141414'/><path d='M10 5Q20 15 30 8M35 20Q45 25 50 15' stroke='#2a2a2a' fill='none'/></svg>
<svg style="left:1614.5px;top:271px" width="55.5" height="31" viewBox="0 0 55.5 31"><rect width='55.5' height='31' fill='url(#sw5)'/></svg>
<svg style="left:1614.5px;top:312px" width="55.5" height="31" viewBox="0 0 55.5 31"><rect width='55.5' height='31' fill='#0a0a0a'/></svg>
<div style="left:1342px;top:355.6px;width:338px;height:1.3px;background:#2e2e2e;"></div>
<div class="t" style="left:1352.5px;top:375.5px;font-size:13.08px;color:#f0f0f0;font-weight:bold;transform:scaleX(0.897);">FILL COLOR</div>
<div style="left:1352.5px;top:395.8px;width:21px;height:21px;border:1px solid #222;background:#1a8fe8"></div>
<svg style="left:1354.5px;top:397.8px" width="17" height="17" viewBox="0 0 17 17"><rect width="17" height="17" fill="#fff"/><path d="M0.5 16.5L16.5 0.5" stroke="#ee1111" stroke-width="1.8"/></svg>
<div style="left:1377.15px;top:397px;width:18px;height:18px;background:#000000;"></div>
<div style="left:1399.6px;top:397px;width:18px;height:18px;background:#ffffff;"></div>
<div style="left:1422.05px;top:397px;width:18px;height:18px;background:#767676;"></div>
<div style="left:1444.5px;top:397px;width:18px;height:18px;background:#bababa;"></div>
<div style="left:1466.95px;top:397px;width:18px;height:18px;background:#a80000;"></div>
<div style="left:1489.4px;top:397px;width:18px;height:18px;background:#f8b060;"></div>
<div style="left:1511.85px;top:397px;width:18px;height:18px;background:#e3d56a;"></div>
<div style="left:1534.3px;top:397px;width:18px;height:18px;background:#6aae5a;"></div>
<div style="left:1556.75px;top:397px;width:18px;height:18px;background:#1f78c6;"></div>
<div style="left:1579.2px;top:397px;width:18px;height:18px;background:#c586d0;"></div>
<div style="left:1354.5px;top:420px;width:18px;height:17.5px;background:#53b38b;"></div>
<div style="left:1376.95px;top:420px;width:18px;height:17.5px;background:#aecec6;"></div>
<div style="left:1399.4px;top:420px;width:18px;height:17.5px;background:#8e8377;"></div>
<div style="left:1421.85px;top:420px;width:18px;height:17.5px;background:#c1a68e;"></div>
<div style="left:1444.3px;top:420px;width:18px;height:17.5px;background:#b57e51;"></div>
<div style="left:1466.75px;top:420px;width:18px;height:17.5px;background:#b39887;"></div>
<div style="left:1489.2px;top:420px;width:18px;height:17.5px;background:#cfb9a8;"></div>
<div style="left:1511.65px;top:420px;width:18px;height:17.5px;background:#834e34;"></div>
<div style="left:1534.1px;top:420px;width:18px;height:17.5px;background:#e3ddd9;"></div>
<div style="left:1556.55px;top:420px;width:18px;height:17.5px;background:#25221c;"></div>
<div style="left:1352.4px;top:454.3px;width:14px;height:14px;background:#2a2a2a;"></div>
<div class="t" style="left:1376.33px;top:461.5px;font-size:16.86px;color:#969696;transform:scaleX(0.974);">Image Blur</div>
<div style="left:1342px;top:482.2px;width:338px;height:1.3px;background:#2e2e2e;"></div>
<div class="t" style="left:1352.5px;top:504.5px;font-size:13.08px;color:#f4f4f4;font-weight:bold;transform:scaleX(0.946);">IMAGE POSITION</div>
<div class="t" style="left:1351.41px;top:534px;font-size:17.44px;color:#a4a4a4;transform:scaleX(0.891);">Fit to Height</div>
<div class="t" style="left:1351.33px;top:653px;font-size:17.44px;color:#a4a4a4;transform:scaleX(0.967);">Fit to Width</div>
<svg style="left:1352px;top:553px" width="96" height="54.5" viewBox="0 0 96 54.5"><rect width='96' height='54.5' fill='#ffffff'/><rect x='9.60' y='0.00' width='9.60' height='9.60' fill='#dcdcdc'/><rect x='28.80' y='0.00' width='9.60' height='9.60' fill='#dcdcdc'/><rect x='48.00' y='0.00' width='9.60' height='9.60' fill='#dcdcdc'/><rect x='67.20' y='0.00' width='9.60' height='9.60' fill='#dcdcdc'/><rect x='86.40' y='0.00' width='9.60' height='9.60' fill='#dcdcdc'/><rect x='0.00' y='9.60' width='9.60' height='9.60' fill='#dcdcdc'/><rect x='19.20' y='9.60' width='9.60' height='9.60' fill='#dcdcdc'/><rect x='38.40' y='9.60' width='9.60' height='9.60' fill='#dcdcdc'/><rect x='57.60' y='9.60' width='9.60' height='9.60' fill='#dcdcdc'/><rect x='76.80' y='9.60' width='9.60' height='9.60' fill='#dcdcdc'/><rect x='96.00' y='9.60' width='9.60' height='9.60' fill='#dcdcdc'/><rect x='9.60' y='19.20' width='9.60' height='9.60' fill='#dcdcdc'/><rect x='28.80' y='19.20' width='9.60' height='9.60' fill='#dcdcdc'/><rect x='48.00' y='19.20' width='9.60' height='9.60' fill='#dcdcdc'/><rect x='67.20' y='19.20' width='9.60' height='9.60' fill='#dcdcdc'/><rect x='86.40' y='19.20' width='9.60' height='9.60' fill='#dcdcdc'/><rect x='0.00' y='28.80' width='9.60' height='9.60' fill='#dcdcdc'/><rect x='19.20' y='28.80' width='9.60' height='9.60' fill='#dcdcdc'/><rect x='38.40' y='28.80' width='9.60' height='9.60' fill='#dcdcdc'/><rect x='57.60' y='28.80' width='9.60' height='9.60' fill='#dcdcdc'/><rect x='76.80' y='28.80' width='9.60' height='9.60' fill='#dcdcdc'/><rect x='96.00' y='28.80' width='9.60' height='9.60' fill='#dcdcdc'/><rect x='9.60' y='38.40' width='9.60' height='9.60' fill='#dcdcdc'/><rect x='28.80' y='38.40' width='9.60' height='9.60' fill='#dcdcdc'/><rect x='48.00' y='38.40' width='9.60' height='9.60' fill='#dcdcdc'/><rect x='67.20' y='38.40' width='9.60' height='9.60' fill='#dcdcdc'/><rect x='86.40' y='38.40' width='9.60' height='9.60' fill='#dcdcdc'/><rect x='0.00' y='48.00' width='9.60' height='9.60' fill='#dcdcdc'/><rect x='19.20' y='48.00' width='9.60' height='9.60' fill='#dcdcdc'/><rect x='38.40' y='48.00' width='9.60' height='9.60' fill='#dcdcdc'/><rect x='57.60' y='48.00' width='9.60' height='9.60' fill='#dcdcdc'/><rect x='76.80' y='48.00' width='9.60' height='9.60' fill='#dcdcdc'/><rect x='96.00' y='48.00' width='9.60' height='9.60' fill='#dcdcdc'/><svg x='0' y='0' width='63.5' height='54.5' viewBox='0 0 1000 857' preserveAspectRatio='none' style='filter:brightness(1.05)'><use href='#church' width='1000' height='857'/></svg></svg>
<svg style="left:1462.3px;top:553px" width="96" height="54.5" viewBox="0 0 96 54.5"><rect width='96' height='54.5' fill='#ffffff'/><rect x='9.60' y='0.00' width='9.60' height='9.60' fill='#dcdcdc'/><rect x='28.80' y='0.00' width='9.60' height='9.60' fill='#dcdcdc'/><rect x='48.00' y='0.00' width='9.60' height='9.60' fill='#dcdcdc'/><rect x='67.20' y='0.00' width='9.60' height='9.60' fill='#dcdcdc'/><rect x='86.40' y='0.00' width='9.60' height='9.60' fill='#dcdcdc'/><rect x='0.00' y='9.60' width='9.60' height='9.60' fill='#dcdcdc'/><rect x='19.20' y='9.60' width='9.60' height='9.60' fill='#dcdcdc'/><rect x='38.40' y='9.60' width='9.60' height='9.60' fill='#dcdcdc'/><rect x='57.60' y='9.60' width='9.60' height='9.60' fill='#dcdcdc'/><rect x='76.80' y='9.60' width='9.60' height='9.60' fill='#dcdcdc'/><rect x='96.00' y='9.60' width='9.60' height='9.60' fill='#dcdcdc'/><rect x='9.60' y='19.20' width='9.60' height='9.60' fill='#dcdcdc'/><rect x='28.80' y='19.20' width='9.60' height='9.60' fill='#dcdcdc'/><rect x='48.00' y='19.20' width='9.60' height='9.60' fill='#dcdcdc'/><rect x='67.20' y='19.20' width='9.60' height='9.60' fill='#dcdcdc'/><rect x='86.40' y='19.20' width='9.60' height='9.60' fill='#dcdcdc'/><rect x='0.00' y='28.80' width='9.60' height='9.60' fill='#dcdcdc'/><rect x='19.20' y='28.80' width='9.60' height='9.60' fill='#dcdcdc'/><rect x='38.40' y='28.80' width='9.60' height='9.60' fill='#dcdcdc'/><rect x='57.60' y='28.80' width='9.60' height='9.60' fill='#dcdcdc'/><rect x='76.80' y='28.80' width='9.60' height='9.60' fill='#dcdcdc'/><rect x='96.00' y='28.80' width='9.60' height='9.60' fill='#dcdcdc'/><rect x='9.60' y='38.40' width='9.60' height='9.60' fill='#dcdcdc'/><rect x='28.80' y='38.40' width='9.60' height='9.60' fill='#dcdcdc'/><rect x='48.00' y='38.40' width='9.60' height='9.60' fill='#dcdcdc'/><rect x='67.20' y='38.40' width='9.60' height='9.60' fill='#dcdcdc'/><rect x='86.40' y='38.40' width='9.60' height='9.60' fill='#dcdcdc'/><rect x='0.00' y='48.00' width='9.60' height='9.60' fill='#dcdcdc'/><rect x='19.20' y='48.00' width='9.60' height='9.60' fill='#dcdcdc'/><rect x='38.40' y='48.00' width='9.60' height='9.60' fill='#dcdcdc'/><rect x='57.60' y='48.00' width='9.60' height='9.60' fill='#dcdcdc'/><rect x='76.80' y='48.00' width='9.60' height='9.60' fill='#dcdcdc'/><rect x='96.00' y='48.00' width='9.60' height='9.60' fill='#dcdcdc'/><svg x='16.5' y='0' width='63.5' height='54.5' viewBox='0 0 1000 857' preserveAspectRatio='none' style='filter:brightness(1.05)'><use href='#church' width='1000' height='857'/></svg></svg>
<svg style="left:1573.5px;top:553px" width="96" height="54.5" viewBox="0 0 96 54.5"><rect width='96' height='54.5' fill='#ffffff'/><rect x='9.60' y='0.00' width='9.60' height='9.60' fill='#dcdcdc'/><rect x='28.80' y='0.00' width='9.60' height='9.60' fill='#dcdcdc'/><rect x='48.00' y='0.00' width='9.60' height='9.60' fill='#dcdcdc'/><rect x='67.20' y='0.00' width='9.60' height='9.60' fill='#dcdcdc'/><rect x='86.40' y='0.00' width='9.60' height='9.60' fill='#dcdcdc'/><rect x='0.00' y='9.60' width='9.60' height='9.60' fill='#dcdcdc'/><rect x='19.20' y='9.60' width='9.60' height='9.60' fill='#dcdcdc'/><rect x='38.40' y='9.60' width='9.60' height='9.60' fill='#dcdcdc'/><rect x='57.60' y='9.60' width='9.60' height='9.60' fill='#dcdcdc'/><rect x='76.80' y='9.60' width='9.60' height='9.60' fill='#dcdcdc'/><rect x='96.00' y='9.60' width='9.60' height='9.60' fill='#dcdcdc'/><rect x='9.60' y='19.20' width='9.60' height='9.60' fill='#dcdcdc'/><rect x='28.80' y='19.20' width='9.60' height='9.60' fill='#dcdcdc'/><rect x='48.00' y='19.20' width='9.60' height='9.60' fill='#dcdcdc'/><rect x='67.20' y='19.20' width='9.60' height='9.60' fill='#dcdcdc'/><rect x='86.40' y='19.20' width='9.60' height='9.60' fill='#dcdcdc'/><rect x='0.00' y='28.80' width='9.60' height='9.60' fill='#dcdcdc'/><rect x='19.20' y='28.80' width='9.60' height='9.60' fill='#dcdcdc'/><rect x='38.40' y='28.80' width='9.60' height='9.60' fill='#dcdcdc'/><rect x='57.60' y='28.80' width='9.60' height='9.60' fill='#dcdcdc'/><rect x='76.80' y='28.80' width='9.60' height='9.60' fill='#dcdcdc'/><rect x='96.00' y='28.80' width='9.60' height='9.60' fill='#dcdcdc'/><rect x='9.60' y='38.40' width='9.60' height='9.60' fill='#dcdcdc'/><rect x='28.80' y='38.40' width='9.60' height='9.60' fill='#dcdcdc'/><rect x='48.00' y='38.40' width='9.60' height='9.60' fill='#dcdcdc'/><rect x='67.20' y='38.40' width='9.60' height='9.60' fill='#dcdcdc'/><rect x='86.40' y='38.40' width='9.60' height='9.60' fill='#dcdcdc'/><rect x='0.00' y='48.00' width='9.60' height='9.60' fill='#dcdcdc'/><rect x='19.20' y='48.00' width='9.60' height='9.60' fill='#dcdcdc'/><rect x='38.40' y='48.00' width='9.60' height='9.60' fill='#dcdcdc'/><rect x='57.60' y='48.00' width='9.60' height='9.60' fill='#dcdcdc'/><rect x='76.80' y='48.00' width='9.60' height='9.60' fill='#dcdcdc'/><rect x='96.00' y='48.00' width='9.60' height='9.60' fill='#dcdcdc'/><svg x='33' y='0' width='63.5' height='54.5' viewBox='0 0 1000 857' preserveAspectRatio='none' style='filter:brightness(1.05)'><use href='#church' width='1000' height='857'/></svg></svg>
<div style="left:1460px;top:671px;width:100.5px;height:58.5px;border:2.3px solid #1a8fe8"></div>
<svg style="left:1352px;top:673px" width="96" height="54.5" viewBox="0 0 96 54.5"><svg width='96' height='54.5' viewBox='0 0 1000 561' preserveAspectRatio='none' style='filter:brightness(1.05)'><use href='#church' width='1000' height='857'/></svg></svg>
<svg style="left:1462.3px;top:673px" width="96" height="54.5" viewBox="0 0 96 54.5"><svg width='96' height='54.5' viewBox='0 148 1000 561' preserveAspectRatio='none' style='filter:brightness(1.05)'><use href='#church' width='1000' height='857'/></svg></svg>
<svg style="left:1573.5px;top:673px" width="96" height="54.5" viewBox="0 0 96 54.5"><svg width='96' height='54.5' viewBox='0 296 1000 561' preserveAspectRatio='none' style='filter:brightness(1.05)'><use href='#church' width='1000' height='857'/></svg></svg>
<div class="t" style="left:1387.8px;top:622.5px;font-size:15.7px;color:#b0b0b0;transform:scaleX(0.895);">Left</div>
<div class="t" style="left:1490.5px;top:622.5px;font-size:15.7px;color:#b0b0b0;transform:scaleX(0.875);">Center</div>
<div class="t" style="left:1604.48px;top:622.5px;font-size:15.7px;color:#b0b0b0;transform:scaleX(0.918);">Right</div>
<div class="t" style="left:1388.7px;top:741.5px;font-size:15.7px;color:#b0b0b0;transform:scaleX(0.903);">Top</div>
<div class="t" style="left:1490.5px;top:741.5px;font-size:15.7px;color:#b0b0b0;transform:scaleX(0.875);">Center</div>
<div class="t" style="left:1597.64px;top:741.5px;font-size:15.7px;color:#b0b0b0;transform:scaleX(0.964);">Bottom</div>
<div style="left:1336px;top:470px;width:351px;height:311px;border:8px solid #65bb4a"></div>
<div style="left:0px;top:858px;width:1919px;height:1px;background:#2a2a2a;"></div>
<div style="left:0px;top:859px;width:1919px;height:169px;background:#4a4a4a;"></div>
<div style="left:1470px;top:859px;width:216px;height:152px;background:#2e2e2e;"></div>
<div style="left:1470px;top:859px;width:216px;height:2.5px;background:#f3e600;"></div>
<div style="left:1697px;top:859px;width:2px;height:152px;background:#2e2e2e;"></div>
<div style="left:14px;top:859px;width:1683px;height:160px;overflow:hidden">
<svg style="left:-43px;top:32px" width="196" height="110" viewBox="0 0 196 110" preserveAspectRatio="none"><use href="#th_giving" width="196" height="110"/></svg>
<svg style="left:173px;top:32px" width="196" height="110" viewBox="0 0 196 110" preserveAspectRatio="none"><use href="#th_worship" width="196" height="110"/></svg>
<div class="t" style="left:172.7px;top:16px;font-size:17.44px;color:#e8e8e8;-webkit-text-stroke:0.3px #e8e8e8;transform:scaleX(0.947);">Worship Night Announc…</div>
<svg style="left:388px;top:32px" width="196" height="110" viewBox="0 0 196 110" preserveAspectRatio="none"><use href="#th_announce" width="196" height="110"/></svg>
<div class="t" style="left:388.3px;top:16px;font-size:17.44px;color:#e8e8e8;-webkit-text-stroke:0.3px #e8e8e8;transform:scaleX(0.954);">Announcement</div>
<svg style="left:604px;top:32px" width="196" height="110" viewBox="0 0 196 110" preserveAspectRatio="none"><use href="#th_signals" width="196" height="110"/></svg>
<div class="t" style="left:603.25px;top:16px;font-size:17.44px;color:#e8e8e8;-webkit-text-stroke:0.3px #e8e8e8;transform:scaleX(0.945);">Proclaim Signals - Getti…</div>
<svg style="left:819px;top:32px" width="196" height="110" viewBox="0 0 196 110" preserveAspectRatio="none"><use href="#th_bulletin" width="196" height="110"/></svg>
<div class="t" style="left:818.78px;top:16px;font-size:17.44px;color:#e8e8e8;-webkit-text-stroke:0.3px #e8e8e8;transform:scaleX(1.024);">Bulletin</div>
<svg style="left:1035px;top:32px" width="196" height="110" viewBox="0 0 196 110" preserveAspectRatio="none"><use href="#th_mens" width="196" height="110"/></svg>
<div class="t" style="left:1034.57px;top:16px;font-size:17.44px;color:#e8e8e8;-webkit-text-stroke:0.3px #e8e8e8;transform:scaleX(0.934);">Men's Bible Study</div>
<svg style="left:1251px;top:32px" width="196" height="110" viewBox="0 0 196 110" preserveAspectRatio="none"><use href="#th_sunday" width="196" height="110"/></svg>
<div class="t" style="left:1250.8px;top:16px;font-size:17.44px;color:#e8e8e8;-webkit-text-stroke:0.3px #e8e8e8;transform:scaleX(0.936);">Sunday School</div>
<svg style="left:1466px;top:32px" width="196" height="110" viewBox="0 0 196 110" preserveAspectRatio="none"><use href="#th_cross" width="196" height="110"/></svg>
<div class="t" style="left:1466px;top:16px;font-size:17.44px;color:#e8e8e8;-webkit-text-stroke:0.3px #e8e8e8;transform:scaleX(0.909);">Cross-stage</div>
<div class="t" style="left:-0.7px;top:16px;font-size:17.44px;color:#e8e8e8;-webkit-text-stroke:0.3px #e8e8e8;transform:scaleX(0.880);">e Giving</div>
</div>
<svg style="left:1718px;top:891px" width="183" height="110" viewBox="0 0 183 110" preserveAspectRatio="none"><use href="#th_countdown" width="196" height="110"/></svg>
<div class="t" style="left:1718.4px;top:875px;font-size:17.44px;color:#e8e8e8;-webkit-text-stroke:0.3px #e8e8e8;transform:scaleX(0.959);">Countdown 1 min</div>
<svg style="left:1905px;top:866px" width="9" height="4.5" viewBox="0 0 9 4.5"><path d="M0 4.5H9L4.5 0Z" fill="#5a5a5a"/></svg>
<svg style="left:1905px;top:998.6px" width="9" height="4.5" viewBox="0 0 9 4.5"><path d="M0 0H9L4.5 4.5Z" fill="#5a5a5a"/></svg>
<div style="left:122px;top:1018px;width:182px;height:6px;border-radius:3px;background:#5e5e5e"></div>
<svg style="left:5.5px;top:1016px" width="8.5" height="9.5" viewBox="0 0 8.5 9.5"><path d="M0 0H8L4 4.5ZM0 5H8L4 9.5Z" fill="#d0d0d0"/></svg>
<svg style="left:21px;top:1019px" width="4.5" height="5.5" viewBox="0 0 4.5 5.5"><path d="M4.5 0V5.5L0 2.75Z" fill="#5a5a5a"/></svg>
<svg style="left:1890px;top:1019px" width="4.5" height="5" viewBox="0 0 4.5 5"><path d="M0 0V5L4.5 2.5Z" fill="#5a5a5a"/></svg>
</body></html>
